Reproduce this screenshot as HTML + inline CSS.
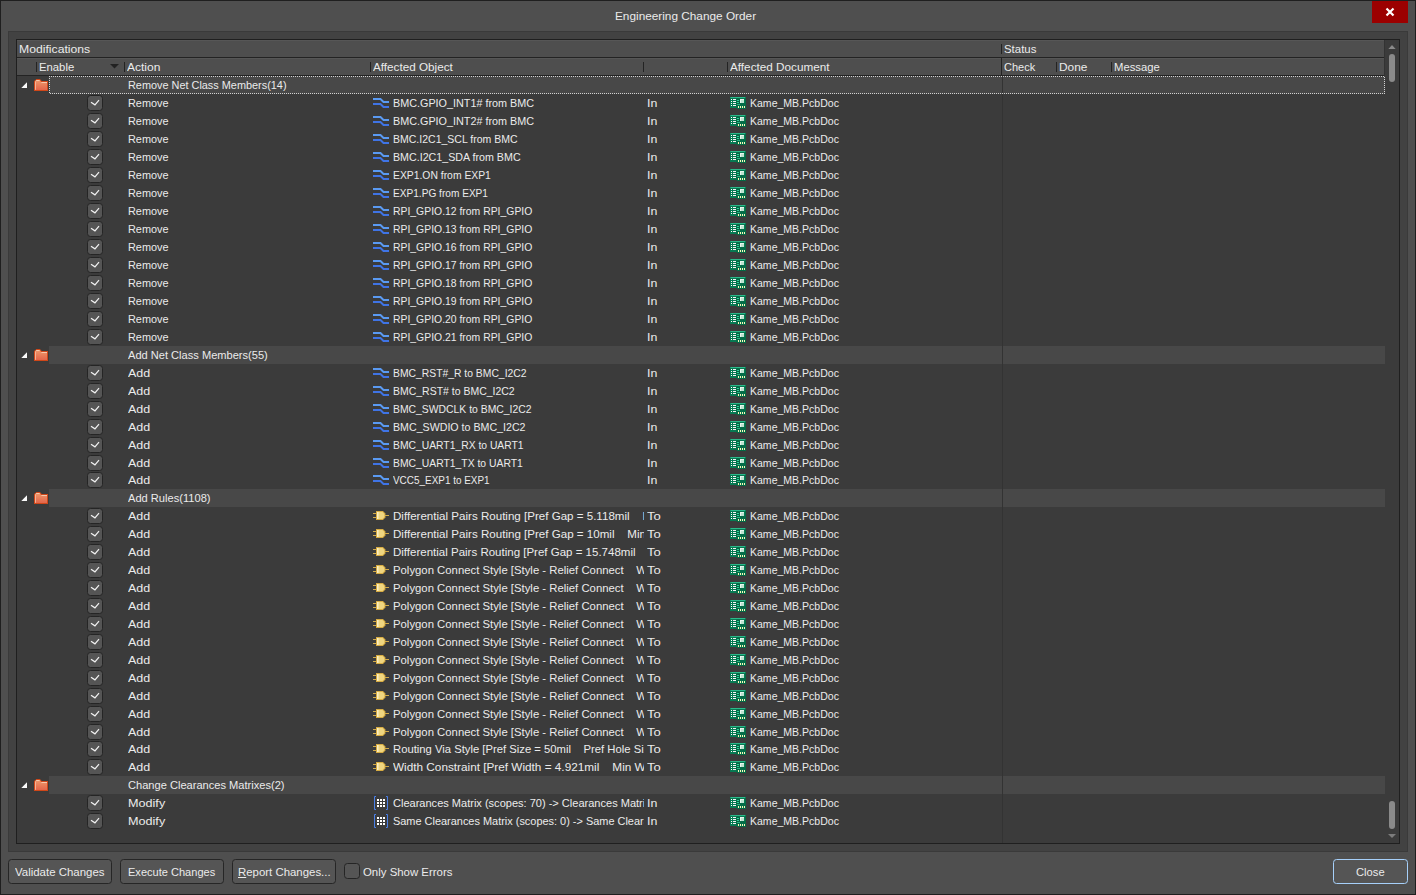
<!DOCTYPE html>
<html lang="en"><head><meta charset="utf-8"><title>Engineering Change Order</title>
<style>
html,body{margin:0;padding:0;background:#4f4f4f;}
body{width:1416px;height:895px;overflow:hidden;position:relative;font:11px/18px "Liberation Sans", sans-serif;color:#ebebeb;}
.abs,.ic,.t,.cb,.ln,.cell,.btn{position:absolute;}
.ic{display:block;}
.t{display:inline-block;white-space:pre;transform-origin:0 50%;left:0;top:0;line-height:18px;}
.cell{height:18px;overflow:hidden;white-space:pre;}
#win{position:absolute;left:0;top:0;width:1414px;height:893px;border:1px solid #1f1f1f;background:#4f4f4f;}
#panel{position:absolute;left:8px;top:31px;width:1398px;height:819px;border:1px solid #3a3a3a;background:#424242;}
#grid{position:absolute;left:16px;top:39px;width:1382px;height:803px;border:1px solid #1f1f1f;background:#3b3b3b;}
.hdr{position:absolute;left:17px;width:1367px;background:#4e4e4e;border-top:1px solid #565656;box-sizing:border-box;}
.ln{background:#232323;}
.g{position:absolute;left:49px;width:1336px;height:18px;background:#484848;}
.cb{left:87px;width:14px;height:14px;border:1px solid #252525;border-radius:3.5px;background:#555;}
.cb svg{position:absolute;left:0;top:0;}
.btn{top:859px;height:23px;border:1px solid #262626;border-radius:3.5px;background:#555;}
.thumb{position:absolute;left:1389px;width:6px;border-radius:3px;background:#8a8a8a;}

</style></head><body>
<div id="win"></div>
<div class="cell" style="left:615px;top:7px;width:200px;height:20px"><span class="t" style="transform:scaleX(1.0731);">Engineering Change Order</span></div>
<div class="abs" style="left:1372px;top:1px;width:36px;height:22px;background:#9c0000"></div>
<svg class="ic" style="left:1385px;top:7px" width="10" height="10" viewBox="0 0 10 10"><path d="M1.5 1.5L8.5 8.5M8.5 1.5L1.5 8.5" stroke="#fff" stroke-width="2.2"/></svg>
<div id="panel"></div><div id="grid"></div>
<div class="hdr" style="top:40px;height:17px"></div><div class="hdr" style="top:58px;height:17px"></div>
<div class="ln" style="left:17px;top:57px;width:1367px;height:1px"></div>
<div class="ln" style="left:17px;top:75px;width:1367px;height:1px"></div>
<div class="ln" style="left:1384px;top:40px;width:1px;height:36px;background:#333"></div>
<div class="ln" style="left:36px;top:62px;width:1px;height:10px"></div>
<div class="ln" style="left:124px;top:62px;width:1px;height:10px"></div>
<div class="ln" style="left:370px;top:62px;width:1px;height:10px"></div>
<div class="ln" style="left:643px;top:62px;width:1px;height:10px"></div>
<div class="ln" style="left:727px;top:62px;width:1px;height:10px"></div>
<div class="ln" style="left:1056px;top:62px;width:1px;height:10px"></div>
<div class="ln" style="left:1111px;top:62px;width:1px;height:10px"></div>
<div class="ln" style="left:1001px;top:44px;width:1px;height:10px"></div>
<div class="ln" style="left:1001px;top:58px;width:1px;height:17px"></div>
<svg class="ic" style="left:110px;top:64px" width="9" height="5" viewBox="0 0 9 5"><path d="M0 0H9L4.5 4.5Z" fill="#222"/></svg>
<div class="cell" style="left:19px;top:40px;width:200px;height:17px"><span class="t" style="transform:scaleX(1.109);">Modifications</span></div>
<div class="cell" style="left:1004px;top:40px;width:200px;height:17px"><span class="t" style="transform:scaleX(1.0389);">Status</span></div>
<div class="cell" style="left:39px;top:58px;width:200px;height:17px"><span class="t" style="transform:scaleX(1.0273);">Enable</span></div>
<div class="cell" style="left:127px;top:58px;width:200px;height:17px"><span class="t" style="transform:scaleX(1.0923);">Action</span></div>
<div class="cell" style="left:373px;top:58px;width:200px;height:17px"><span class="t" style="transform:scaleX(1.0638);">Affected Object</span></div>
<div class="cell" style="left:730px;top:58px;width:200px;height:17px"><span class="t" style="transform:scaleX(1.0658);">Affected Document</span></div>
<div class="cell" style="left:1004px;top:58px;width:200px;height:17px"><span class="t" style="transform:scaleX(1.0004);">Check</span></div>
<div class="cell" style="left:1059px;top:58px;width:200px;height:17px"><span class="t" style="transform:scaleX(1.08);">Done</span></div>
<div class="cell" style="left:1114px;top:58px;width:200px;height:17px"><span class="t" style="transform:scaleX(1.0237);">Message</span></div>
<div class="g" style="top:76px"></div>
<svg class="ic" style="left:21px;top:82px" width="6" height="6" viewBox="0 0 6 6"><path d="M6 0.3V6H0.3Z" fill="#fafafa"/></svg>
<svg class="ic" style="left:34px;top:79px" width="14" height="12" viewBox="0 0 14 12"><defs><linearGradient id="fg" x1="0" y1="0" x2="0" y2="1"><stop offset="0" stop-color="#ee9a6c"/><stop offset="1" stop-color="#e3654a"/></linearGradient></defs><path d="M0 2.4Q0.3 1.2 1.6 0.9L2.2 0.1H5.9Q7 0.9 7.7 2H14V12H0Z" fill="#cf4719"/><path d="M1 2.2L2.2 1H5.7L7.1 3H13V11H1Z" fill="url(#fg)"/><path d="M2.2 1.5H5.5M7.4 3.5H13" stroke="#f6c9ad" stroke-width="1" fill="none"/><path d="M1.5 2.5V10.8" stroke="#f3b296" stroke-width="1"/></svg>
<div class="cell" style="left:128px;top:76px;width:500px;height:18px"><span class="t" style="transform:scaleX(0.9897);">Remove Net Class Members(14)</span></div>
<div class="cb" style="top:95px"><svg width="14" height="14" viewBox="0 0 14 14"><path d="M3 6.2L6.95 8.85L11 4.1" fill="none" stroke="#f2f2f2" stroke-width="1.2"/></svg></div>
<div class="cell" style="left:128px;top:94px;width:240px;height:18px"><span class="t" style="transform:scaleX(0.991);">Remove</span></div>
<svg class="ic" style="left:373px;top:98px" width="16" height="10" viewBox="0 0 16 10"><path d="M0 1H7.5L10.5 4H16" fill="none" stroke="#5a9af2" stroke-width="2"/><path d="M0 6H7.5L10.5 9H16" fill="none" stroke="#3f74e6" stroke-width="2"/></svg>
<div class="cell" style="left:393px;top:94px;width:251px;height:18px"><span class="t" style="transform:scaleX(0.9816);">BMC.GPIO_INT1# from BMC</span></div>
<div class="cell" style="left:646.5px;top:94px;width:60px;height:18px"><span class="t" style="transform:scaleX(1.1211);">In</span></div>
<svg class="ic" style="left:730px;top:97px" width="16" height="12" viewBox="0 0 16 12"><path d="M0 0H16V12H7V11H0Z" fill="#077a53"/><path d="M0.5 0.5H15.5" stroke="#2bb98a" stroke-width="1"/><path d="M7 5.5V11.5H15.5V0.5" stroke="#056a45" stroke-width="1" fill="none"/><rect x="6.5" y="1.5" width="3.5" height="7.5" fill="#04633f" opacity="0.75"/><rect x="10" y="6.2" width="5" height="2.6" fill="#04633f" opacity="0.6"/><rect x="10" y="2" width="4" height="4" fill="#e9f7ef"/><rect x="11" y="3" width="3" height="3" fill="#bfe3d0"/><rect x="1" y="2" width="1" height="1" fill="#fff"/><rect x="3" y="2" width="3" height="1" fill="#f4f4f4"/><rect x="1" y="4" width="1" height="1" fill="#fff"/><rect x="3" y="4" width="3" height="1" fill="#f4f4f4"/><rect x="1" y="6" width="1" height="1" fill="#fff"/><rect x="3" y="6" width="3" height="1" fill="#f4f4f4"/><rect x="1" y="8" width="1" height="1" fill="#fff"/><rect x="3" y="8" width="3" height="1" fill="#f4f4f4"/><rect x="7" y="3" width="2" height="1" fill="#2fcf9a"/><rect x="7" y="5" width="2" height="1" fill="#2fcf9a"/><rect x="7" y="7" width="3" height="1" fill="#25b585"/><rect x="8" y="9" width="1" height="2" fill="#fdf6b8"/><rect x="10" y="9" width="1" height="2" fill="#fdf6b8"/><rect x="12" y="9" width="1" height="2" fill="#fdf6b8"/><rect x="14" y="9" width="1" height="2" fill="#fdf6b8"/></svg>
<div class="cell" style="left:750px;top:94px;width:240px;height:18px"><span class="t" style="transform:scaleX(0.9566);">Kame_MB.PcbDoc</span></div>
<div class="cb" style="top:113px"><svg width="14" height="14" viewBox="0 0 14 14"><path d="M3 6.2L6.95 8.85L11 4.1" fill="none" stroke="#f2f2f2" stroke-width="1.2"/></svg></div>
<div class="cell" style="left:128px;top:112px;width:240px;height:18px"><span class="t" style="transform:scaleX(0.991);">Remove</span></div>
<svg class="ic" style="left:373px;top:116px" width="16" height="10" viewBox="0 0 16 10"><path d="M0 1H7.5L10.5 4H16" fill="none" stroke="#5a9af2" stroke-width="2"/><path d="M0 6H7.5L10.5 9H16" fill="none" stroke="#3f74e6" stroke-width="2"/></svg>
<div class="cell" style="left:393px;top:112px;width:251px;height:18px"><span class="t" style="transform:scaleX(0.9816);">BMC.GPIO_INT2# from BMC</span></div>
<div class="cell" style="left:646.5px;top:112px;width:60px;height:18px"><span class="t" style="transform:scaleX(1.1211);">In</span></div>
<svg class="ic" style="left:730px;top:115px" width="16" height="12" viewBox="0 0 16 12"><path d="M0 0H16V12H7V11H0Z" fill="#077a53"/><path d="M0.5 0.5H15.5" stroke="#2bb98a" stroke-width="1"/><path d="M7 5.5V11.5H15.5V0.5" stroke="#056a45" stroke-width="1" fill="none"/><rect x="6.5" y="1.5" width="3.5" height="7.5" fill="#04633f" opacity="0.75"/><rect x="10" y="6.2" width="5" height="2.6" fill="#04633f" opacity="0.6"/><rect x="10" y="2" width="4" height="4" fill="#e9f7ef"/><rect x="11" y="3" width="3" height="3" fill="#bfe3d0"/><rect x="1" y="2" width="1" height="1" fill="#fff"/><rect x="3" y="2" width="3" height="1" fill="#f4f4f4"/><rect x="1" y="4" width="1" height="1" fill="#fff"/><rect x="3" y="4" width="3" height="1" fill="#f4f4f4"/><rect x="1" y="6" width="1" height="1" fill="#fff"/><rect x="3" y="6" width="3" height="1" fill="#f4f4f4"/><rect x="1" y="8" width="1" height="1" fill="#fff"/><rect x="3" y="8" width="3" height="1" fill="#f4f4f4"/><rect x="7" y="3" width="2" height="1" fill="#2fcf9a"/><rect x="7" y="5" width="2" height="1" fill="#2fcf9a"/><rect x="7" y="7" width="3" height="1" fill="#25b585"/><rect x="8" y="9" width="1" height="2" fill="#fdf6b8"/><rect x="10" y="9" width="1" height="2" fill="#fdf6b8"/><rect x="12" y="9" width="1" height="2" fill="#fdf6b8"/><rect x="14" y="9" width="1" height="2" fill="#fdf6b8"/></svg>
<div class="cell" style="left:750px;top:112px;width:240px;height:18px"><span class="t" style="transform:scaleX(0.9566);">Kame_MB.PcbDoc</span></div>
<div class="cb" style="top:131px"><svg width="14" height="14" viewBox="0 0 14 14"><path d="M3 6.2L6.95 8.85L11 4.1" fill="none" stroke="#f2f2f2" stroke-width="1.2"/></svg></div>
<div class="cell" style="left:128px;top:130px;width:240px;height:18px"><span class="t" style="transform:scaleX(0.991);">Remove</span></div>
<svg class="ic" style="left:373px;top:134px" width="16" height="10" viewBox="0 0 16 10"><path d="M0 1H7.5L10.5 4H16" fill="none" stroke="#5a9af2" stroke-width="2"/><path d="M0 6H7.5L10.5 9H16" fill="none" stroke="#3f74e6" stroke-width="2"/></svg>
<div class="cell" style="left:393px;top:130px;width:251px;height:18px"><span class="t" style="transform:scaleX(0.9555);">BMC.I2C1_SCL from BMC</span></div>
<div class="cell" style="left:646.5px;top:130px;width:60px;height:18px"><span class="t" style="transform:scaleX(1.1211);">In</span></div>
<svg class="ic" style="left:730px;top:133px" width="16" height="12" viewBox="0 0 16 12"><path d="M0 0H16V12H7V11H0Z" fill="#077a53"/><path d="M0.5 0.5H15.5" stroke="#2bb98a" stroke-width="1"/><path d="M7 5.5V11.5H15.5V0.5" stroke="#056a45" stroke-width="1" fill="none"/><rect x="6.5" y="1.5" width="3.5" height="7.5" fill="#04633f" opacity="0.75"/><rect x="10" y="6.2" width="5" height="2.6" fill="#04633f" opacity="0.6"/><rect x="10" y="2" width="4" height="4" fill="#e9f7ef"/><rect x="11" y="3" width="3" height="3" fill="#bfe3d0"/><rect x="1" y="2" width="1" height="1" fill="#fff"/><rect x="3" y="2" width="3" height="1" fill="#f4f4f4"/><rect x="1" y="4" width="1" height="1" fill="#fff"/><rect x="3" y="4" width="3" height="1" fill="#f4f4f4"/><rect x="1" y="6" width="1" height="1" fill="#fff"/><rect x="3" y="6" width="3" height="1" fill="#f4f4f4"/><rect x="1" y="8" width="1" height="1" fill="#fff"/><rect x="3" y="8" width="3" height="1" fill="#f4f4f4"/><rect x="7" y="3" width="2" height="1" fill="#2fcf9a"/><rect x="7" y="5" width="2" height="1" fill="#2fcf9a"/><rect x="7" y="7" width="3" height="1" fill="#25b585"/><rect x="8" y="9" width="1" height="2" fill="#fdf6b8"/><rect x="10" y="9" width="1" height="2" fill="#fdf6b8"/><rect x="12" y="9" width="1" height="2" fill="#fdf6b8"/><rect x="14" y="9" width="1" height="2" fill="#fdf6b8"/></svg>
<div class="cell" style="left:750px;top:130px;width:240px;height:18px"><span class="t" style="transform:scaleX(0.9566);">Kame_MB.PcbDoc</span></div>
<div class="cb" style="top:149px"><svg width="14" height="14" viewBox="0 0 14 14"><path d="M3 6.2L6.95 8.85L11 4.1" fill="none" stroke="#f2f2f2" stroke-width="1.2"/></svg></div>
<div class="cell" style="left:128px;top:148px;width:240px;height:18px"><span class="t" style="transform:scaleX(0.991);">Remove</span></div>
<svg class="ic" style="left:373px;top:152px" width="16" height="10" viewBox="0 0 16 10"><path d="M0 1H7.5L10.5 4H16" fill="none" stroke="#5a9af2" stroke-width="2"/><path d="M0 6H7.5L10.5 9H16" fill="none" stroke="#3f74e6" stroke-width="2"/></svg>
<div class="cell" style="left:393px;top:148px;width:251px;height:18px"><span class="t" style="transform:scaleX(0.9709);">BMC.I2C1_SDA from BMC</span></div>
<div class="cell" style="left:646.5px;top:148px;width:60px;height:18px"><span class="t" style="transform:scaleX(1.1211);">In</span></div>
<svg class="ic" style="left:730px;top:151px" width="16" height="12" viewBox="0 0 16 12"><path d="M0 0H16V12H7V11H0Z" fill="#077a53"/><path d="M0.5 0.5H15.5" stroke="#2bb98a" stroke-width="1"/><path d="M7 5.5V11.5H15.5V0.5" stroke="#056a45" stroke-width="1" fill="none"/><rect x="6.5" y="1.5" width="3.5" height="7.5" fill="#04633f" opacity="0.75"/><rect x="10" y="6.2" width="5" height="2.6" fill="#04633f" opacity="0.6"/><rect x="10" y="2" width="4" height="4" fill="#e9f7ef"/><rect x="11" y="3" width="3" height="3" fill="#bfe3d0"/><rect x="1" y="2" width="1" height="1" fill="#fff"/><rect x="3" y="2" width="3" height="1" fill="#f4f4f4"/><rect x="1" y="4" width="1" height="1" fill="#fff"/><rect x="3" y="4" width="3" height="1" fill="#f4f4f4"/><rect x="1" y="6" width="1" height="1" fill="#fff"/><rect x="3" y="6" width="3" height="1" fill="#f4f4f4"/><rect x="1" y="8" width="1" height="1" fill="#fff"/><rect x="3" y="8" width="3" height="1" fill="#f4f4f4"/><rect x="7" y="3" width="2" height="1" fill="#2fcf9a"/><rect x="7" y="5" width="2" height="1" fill="#2fcf9a"/><rect x="7" y="7" width="3" height="1" fill="#25b585"/><rect x="8" y="9" width="1" height="2" fill="#fdf6b8"/><rect x="10" y="9" width="1" height="2" fill="#fdf6b8"/><rect x="12" y="9" width="1" height="2" fill="#fdf6b8"/><rect x="14" y="9" width="1" height="2" fill="#fdf6b8"/></svg>
<div class="cell" style="left:750px;top:148px;width:240px;height:18px"><span class="t" style="transform:scaleX(0.9566);">Kame_MB.PcbDoc</span></div>
<div class="cb" style="top:167px"><svg width="14" height="14" viewBox="0 0 14 14"><path d="M3 6.2L6.95 8.85L11 4.1" fill="none" stroke="#f2f2f2" stroke-width="1.2"/></svg></div>
<div class="cell" style="left:128px;top:166px;width:240px;height:18px"><span class="t" style="transform:scaleX(0.991);">Remove</span></div>
<svg class="ic" style="left:373px;top:170px" width="16" height="10" viewBox="0 0 16 10"><path d="M0 1H7.5L10.5 4H16" fill="none" stroke="#5a9af2" stroke-width="2"/><path d="M0 6H7.5L10.5 9H16" fill="none" stroke="#3f74e6" stroke-width="2"/></svg>
<div class="cell" style="left:393px;top:166px;width:251px;height:18px"><span class="t" style="transform:scaleX(0.9419);">EXP1.ON from EXP1</span></div>
<div class="cell" style="left:646.5px;top:166px;width:60px;height:18px"><span class="t" style="transform:scaleX(1.1211);">In</span></div>
<svg class="ic" style="left:730px;top:169px" width="16" height="12" viewBox="0 0 16 12"><path d="M0 0H16V12H7V11H0Z" fill="#077a53"/><path d="M0.5 0.5H15.5" stroke="#2bb98a" stroke-width="1"/><path d="M7 5.5V11.5H15.5V0.5" stroke="#056a45" stroke-width="1" fill="none"/><rect x="6.5" y="1.5" width="3.5" height="7.5" fill="#04633f" opacity="0.75"/><rect x="10" y="6.2" width="5" height="2.6" fill="#04633f" opacity="0.6"/><rect x="10" y="2" width="4" height="4" fill="#e9f7ef"/><rect x="11" y="3" width="3" height="3" fill="#bfe3d0"/><rect x="1" y="2" width="1" height="1" fill="#fff"/><rect x="3" y="2" width="3" height="1" fill="#f4f4f4"/><rect x="1" y="4" width="1" height="1" fill="#fff"/><rect x="3" y="4" width="3" height="1" fill="#f4f4f4"/><rect x="1" y="6" width="1" height="1" fill="#fff"/><rect x="3" y="6" width="3" height="1" fill="#f4f4f4"/><rect x="1" y="8" width="1" height="1" fill="#fff"/><rect x="3" y="8" width="3" height="1" fill="#f4f4f4"/><rect x="7" y="3" width="2" height="1" fill="#2fcf9a"/><rect x="7" y="5" width="2" height="1" fill="#2fcf9a"/><rect x="7" y="7" width="3" height="1" fill="#25b585"/><rect x="8" y="9" width="1" height="2" fill="#fdf6b8"/><rect x="10" y="9" width="1" height="2" fill="#fdf6b8"/><rect x="12" y="9" width="1" height="2" fill="#fdf6b8"/><rect x="14" y="9" width="1" height="2" fill="#fdf6b8"/></svg>
<div class="cell" style="left:750px;top:166px;width:240px;height:18px"><span class="t" style="transform:scaleX(0.9566);">Kame_MB.PcbDoc</span></div>
<div class="cb" style="top:185px"><svg width="14" height="14" viewBox="0 0 14 14"><path d="M3 6.2L6.95 8.85L11 4.1" fill="none" stroke="#f2f2f2" stroke-width="1.2"/></svg></div>
<div class="cell" style="left:128px;top:184px;width:240px;height:18px"><span class="t" style="transform:scaleX(0.991);">Remove</span></div>
<svg class="ic" style="left:373px;top:188px" width="16" height="10" viewBox="0 0 16 10"><path d="M0 1H7.5L10.5 4H16" fill="none" stroke="#5a9af2" stroke-width="2"/><path d="M0 6H7.5L10.5 9H16" fill="none" stroke="#3f74e6" stroke-width="2"/></svg>
<div class="cell" style="left:393px;top:184px;width:251px;height:18px"><span class="t" style="transform:scaleX(0.9194);">EXP1.PG from EXP1</span></div>
<div class="cell" style="left:646.5px;top:184px;width:60px;height:18px"><span class="t" style="transform:scaleX(1.1211);">In</span></div>
<svg class="ic" style="left:730px;top:187px" width="16" height="12" viewBox="0 0 16 12"><path d="M0 0H16V12H7V11H0Z" fill="#077a53"/><path d="M0.5 0.5H15.5" stroke="#2bb98a" stroke-width="1"/><path d="M7 5.5V11.5H15.5V0.5" stroke="#056a45" stroke-width="1" fill="none"/><rect x="6.5" y="1.5" width="3.5" height="7.5" fill="#04633f" opacity="0.75"/><rect x="10" y="6.2" width="5" height="2.6" fill="#04633f" opacity="0.6"/><rect x="10" y="2" width="4" height="4" fill="#e9f7ef"/><rect x="11" y="3" width="3" height="3" fill="#bfe3d0"/><rect x="1" y="2" width="1" height="1" fill="#fff"/><rect x="3" y="2" width="3" height="1" fill="#f4f4f4"/><rect x="1" y="4" width="1" height="1" fill="#fff"/><rect x="3" y="4" width="3" height="1" fill="#f4f4f4"/><rect x="1" y="6" width="1" height="1" fill="#fff"/><rect x="3" y="6" width="3" height="1" fill="#f4f4f4"/><rect x="1" y="8" width="1" height="1" fill="#fff"/><rect x="3" y="8" width="3" height="1" fill="#f4f4f4"/><rect x="7" y="3" width="2" height="1" fill="#2fcf9a"/><rect x="7" y="5" width="2" height="1" fill="#2fcf9a"/><rect x="7" y="7" width="3" height="1" fill="#25b585"/><rect x="8" y="9" width="1" height="2" fill="#fdf6b8"/><rect x="10" y="9" width="1" height="2" fill="#fdf6b8"/><rect x="12" y="9" width="1" height="2" fill="#fdf6b8"/><rect x="14" y="9" width="1" height="2" fill="#fdf6b8"/></svg>
<div class="cell" style="left:750px;top:184px;width:240px;height:18px"><span class="t" style="transform:scaleX(0.9566);">Kame_MB.PcbDoc</span></div>
<div class="cb" style="top:203px"><svg width="14" height="14" viewBox="0 0 14 14"><path d="M3 6.2L6.95 8.85L11 4.1" fill="none" stroke="#f2f2f2" stroke-width="1.2"/></svg></div>
<div class="cell" style="left:128px;top:202px;width:240px;height:18px"><span class="t" style="transform:scaleX(0.991);">Remove</span></div>
<svg class="ic" style="left:373px;top:206px" width="16" height="10" viewBox="0 0 16 10"><path d="M0 1H7.5L10.5 4H16" fill="none" stroke="#5a9af2" stroke-width="2"/><path d="M0 6H7.5L10.5 9H16" fill="none" stroke="#3f74e6" stroke-width="2"/></svg>
<div class="cell" style="left:393px;top:202px;width:251px;height:18px"><span class="t" style="transform:scaleX(0.9455);">RPI_GPIO.12 from RPI_GPIO</span></div>
<div class="cell" style="left:646.5px;top:202px;width:60px;height:18px"><span class="t" style="transform:scaleX(1.1211);">In</span></div>
<svg class="ic" style="left:730px;top:205px" width="16" height="12" viewBox="0 0 16 12"><path d="M0 0H16V12H7V11H0Z" fill="#077a53"/><path d="M0.5 0.5H15.5" stroke="#2bb98a" stroke-width="1"/><path d="M7 5.5V11.5H15.5V0.5" stroke="#056a45" stroke-width="1" fill="none"/><rect x="6.5" y="1.5" width="3.5" height="7.5" fill="#04633f" opacity="0.75"/><rect x="10" y="6.2" width="5" height="2.6" fill="#04633f" opacity="0.6"/><rect x="10" y="2" width="4" height="4" fill="#e9f7ef"/><rect x="11" y="3" width="3" height="3" fill="#bfe3d0"/><rect x="1" y="2" width="1" height="1" fill="#fff"/><rect x="3" y="2" width="3" height="1" fill="#f4f4f4"/><rect x="1" y="4" width="1" height="1" fill="#fff"/><rect x="3" y="4" width="3" height="1" fill="#f4f4f4"/><rect x="1" y="6" width="1" height="1" fill="#fff"/><rect x="3" y="6" width="3" height="1" fill="#f4f4f4"/><rect x="1" y="8" width="1" height="1" fill="#fff"/><rect x="3" y="8" width="3" height="1" fill="#f4f4f4"/><rect x="7" y="3" width="2" height="1" fill="#2fcf9a"/><rect x="7" y="5" width="2" height="1" fill="#2fcf9a"/><rect x="7" y="7" width="3" height="1" fill="#25b585"/><rect x="8" y="9" width="1" height="2" fill="#fdf6b8"/><rect x="10" y="9" width="1" height="2" fill="#fdf6b8"/><rect x="12" y="9" width="1" height="2" fill="#fdf6b8"/><rect x="14" y="9" width="1" height="2" fill="#fdf6b8"/></svg>
<div class="cell" style="left:750px;top:202px;width:240px;height:18px"><span class="t" style="transform:scaleX(0.9566);">Kame_MB.PcbDoc</span></div>
<div class="cb" style="top:221px"><svg width="14" height="14" viewBox="0 0 14 14"><path d="M3 6.2L6.95 8.85L11 4.1" fill="none" stroke="#f2f2f2" stroke-width="1.2"/></svg></div>
<div class="cell" style="left:128px;top:220px;width:240px;height:18px"><span class="t" style="transform:scaleX(0.991);">Remove</span></div>
<svg class="ic" style="left:373px;top:224px" width="16" height="10" viewBox="0 0 16 10"><path d="M0 1H7.5L10.5 4H16" fill="none" stroke="#5a9af2" stroke-width="2"/><path d="M0 6H7.5L10.5 9H16" fill="none" stroke="#3f74e6" stroke-width="2"/></svg>
<div class="cell" style="left:393px;top:220px;width:251px;height:18px"><span class="t" style="transform:scaleX(0.9455);">RPI_GPIO.13 from RPI_GPIO</span></div>
<div class="cell" style="left:646.5px;top:220px;width:60px;height:18px"><span class="t" style="transform:scaleX(1.1211);">In</span></div>
<svg class="ic" style="left:730px;top:223px" width="16" height="12" viewBox="0 0 16 12"><path d="M0 0H16V12H7V11H0Z" fill="#077a53"/><path d="M0.5 0.5H15.5" stroke="#2bb98a" stroke-width="1"/><path d="M7 5.5V11.5H15.5V0.5" stroke="#056a45" stroke-width="1" fill="none"/><rect x="6.5" y="1.5" width="3.5" height="7.5" fill="#04633f" opacity="0.75"/><rect x="10" y="6.2" width="5" height="2.6" fill="#04633f" opacity="0.6"/><rect x="10" y="2" width="4" height="4" fill="#e9f7ef"/><rect x="11" y="3" width="3" height="3" fill="#bfe3d0"/><rect x="1" y="2" width="1" height="1" fill="#fff"/><rect x="3" y="2" width="3" height="1" fill="#f4f4f4"/><rect x="1" y="4" width="1" height="1" fill="#fff"/><rect x="3" y="4" width="3" height="1" fill="#f4f4f4"/><rect x="1" y="6" width="1" height="1" fill="#fff"/><rect x="3" y="6" width="3" height="1" fill="#f4f4f4"/><rect x="1" y="8" width="1" height="1" fill="#fff"/><rect x="3" y="8" width="3" height="1" fill="#f4f4f4"/><rect x="7" y="3" width="2" height="1" fill="#2fcf9a"/><rect x="7" y="5" width="2" height="1" fill="#2fcf9a"/><rect x="7" y="7" width="3" height="1" fill="#25b585"/><rect x="8" y="9" width="1" height="2" fill="#fdf6b8"/><rect x="10" y="9" width="1" height="2" fill="#fdf6b8"/><rect x="12" y="9" width="1" height="2" fill="#fdf6b8"/><rect x="14" y="9" width="1" height="2" fill="#fdf6b8"/></svg>
<div class="cell" style="left:750px;top:220px;width:240px;height:18px"><span class="t" style="transform:scaleX(0.9566);">Kame_MB.PcbDoc</span></div>
<div class="cb" style="top:239px"><svg width="14" height="14" viewBox="0 0 14 14"><path d="M3 6.2L6.95 8.85L11 4.1" fill="none" stroke="#f2f2f2" stroke-width="1.2"/></svg></div>
<div class="cell" style="left:128px;top:238px;width:240px;height:18px"><span class="t" style="transform:scaleX(0.991);">Remove</span></div>
<svg class="ic" style="left:373px;top:242px" width="16" height="10" viewBox="0 0 16 10"><path d="M0 1H7.5L10.5 4H16" fill="none" stroke="#5a9af2" stroke-width="2"/><path d="M0 6H7.5L10.5 9H16" fill="none" stroke="#3f74e6" stroke-width="2"/></svg>
<div class="cell" style="left:393px;top:238px;width:251px;height:18px"><span class="t" style="transform:scaleX(0.9455);">RPI_GPIO.16 from RPI_GPIO</span></div>
<div class="cell" style="left:646.5px;top:238px;width:60px;height:18px"><span class="t" style="transform:scaleX(1.1211);">In</span></div>
<svg class="ic" style="left:730px;top:241px" width="16" height="12" viewBox="0 0 16 12"><path d="M0 0H16V12H7V11H0Z" fill="#077a53"/><path d="M0.5 0.5H15.5" stroke="#2bb98a" stroke-width="1"/><path d="M7 5.5V11.5H15.5V0.5" stroke="#056a45" stroke-width="1" fill="none"/><rect x="6.5" y="1.5" width="3.5" height="7.5" fill="#04633f" opacity="0.75"/><rect x="10" y="6.2" width="5" height="2.6" fill="#04633f" opacity="0.6"/><rect x="10" y="2" width="4" height="4" fill="#e9f7ef"/><rect x="11" y="3" width="3" height="3" fill="#bfe3d0"/><rect x="1" y="2" width="1" height="1" fill="#fff"/><rect x="3" y="2" width="3" height="1" fill="#f4f4f4"/><rect x="1" y="4" width="1" height="1" fill="#fff"/><rect x="3" y="4" width="3" height="1" fill="#f4f4f4"/><rect x="1" y="6" width="1" height="1" fill="#fff"/><rect x="3" y="6" width="3" height="1" fill="#f4f4f4"/><rect x="1" y="8" width="1" height="1" fill="#fff"/><rect x="3" y="8" width="3" height="1" fill="#f4f4f4"/><rect x="7" y="3" width="2" height="1" fill="#2fcf9a"/><rect x="7" y="5" width="2" height="1" fill="#2fcf9a"/><rect x="7" y="7" width="3" height="1" fill="#25b585"/><rect x="8" y="9" width="1" height="2" fill="#fdf6b8"/><rect x="10" y="9" width="1" height="2" fill="#fdf6b8"/><rect x="12" y="9" width="1" height="2" fill="#fdf6b8"/><rect x="14" y="9" width="1" height="2" fill="#fdf6b8"/></svg>
<div class="cell" style="left:750px;top:238px;width:240px;height:18px"><span class="t" style="transform:scaleX(0.9566);">Kame_MB.PcbDoc</span></div>
<div class="cb" style="top:257px"><svg width="14" height="14" viewBox="0 0 14 14"><path d="M3 6.2L6.95 8.85L11 4.1" fill="none" stroke="#f2f2f2" stroke-width="1.2"/></svg></div>
<div class="cell" style="left:128px;top:256px;width:240px;height:18px"><span class="t" style="transform:scaleX(0.991);">Remove</span></div>
<svg class="ic" style="left:373px;top:260px" width="16" height="10" viewBox="0 0 16 10"><path d="M0 1H7.5L10.5 4H16" fill="none" stroke="#5a9af2" stroke-width="2"/><path d="M0 6H7.5L10.5 9H16" fill="none" stroke="#3f74e6" stroke-width="2"/></svg>
<div class="cell" style="left:393px;top:256px;width:251px;height:18px"><span class="t" style="transform:scaleX(0.9455);">RPI_GPIO.17 from RPI_GPIO</span></div>
<div class="cell" style="left:646.5px;top:256px;width:60px;height:18px"><span class="t" style="transform:scaleX(1.1211);">In</span></div>
<svg class="ic" style="left:730px;top:259px" width="16" height="12" viewBox="0 0 16 12"><path d="M0 0H16V12H7V11H0Z" fill="#077a53"/><path d="M0.5 0.5H15.5" stroke="#2bb98a" stroke-width="1"/><path d="M7 5.5V11.5H15.5V0.5" stroke="#056a45" stroke-width="1" fill="none"/><rect x="6.5" y="1.5" width="3.5" height="7.5" fill="#04633f" opacity="0.75"/><rect x="10" y="6.2" width="5" height="2.6" fill="#04633f" opacity="0.6"/><rect x="10" y="2" width="4" height="4" fill="#e9f7ef"/><rect x="11" y="3" width="3" height="3" fill="#bfe3d0"/><rect x="1" y="2" width="1" height="1" fill="#fff"/><rect x="3" y="2" width="3" height="1" fill="#f4f4f4"/><rect x="1" y="4" width="1" height="1" fill="#fff"/><rect x="3" y="4" width="3" height="1" fill="#f4f4f4"/><rect x="1" y="6" width="1" height="1" fill="#fff"/><rect x="3" y="6" width="3" height="1" fill="#f4f4f4"/><rect x="1" y="8" width="1" height="1" fill="#fff"/><rect x="3" y="8" width="3" height="1" fill="#f4f4f4"/><rect x="7" y="3" width="2" height="1" fill="#2fcf9a"/><rect x="7" y="5" width="2" height="1" fill="#2fcf9a"/><rect x="7" y="7" width="3" height="1" fill="#25b585"/><rect x="8" y="9" width="1" height="2" fill="#fdf6b8"/><rect x="10" y="9" width="1" height="2" fill="#fdf6b8"/><rect x="12" y="9" width="1" height="2" fill="#fdf6b8"/><rect x="14" y="9" width="1" height="2" fill="#fdf6b8"/></svg>
<div class="cell" style="left:750px;top:256px;width:240px;height:18px"><span class="t" style="transform:scaleX(0.9566);">Kame_MB.PcbDoc</span></div>
<div class="cb" style="top:275px"><svg width="14" height="14" viewBox="0 0 14 14"><path d="M3 6.2L6.95 8.85L11 4.1" fill="none" stroke="#f2f2f2" stroke-width="1.2"/></svg></div>
<div class="cell" style="left:128px;top:274px;width:240px;height:18px"><span class="t" style="transform:scaleX(0.991);">Remove</span></div>
<svg class="ic" style="left:373px;top:278px" width="16" height="10" viewBox="0 0 16 10"><path d="M0 1H7.5L10.5 4H16" fill="none" stroke="#5a9af2" stroke-width="2"/><path d="M0 6H7.5L10.5 9H16" fill="none" stroke="#3f74e6" stroke-width="2"/></svg>
<div class="cell" style="left:393px;top:274px;width:251px;height:18px"><span class="t" style="transform:scaleX(0.9455);">RPI_GPIO.18 from RPI_GPIO</span></div>
<div class="cell" style="left:646.5px;top:274px;width:60px;height:18px"><span class="t" style="transform:scaleX(1.1211);">In</span></div>
<svg class="ic" style="left:730px;top:277px" width="16" height="12" viewBox="0 0 16 12"><path d="M0 0H16V12H7V11H0Z" fill="#077a53"/><path d="M0.5 0.5H15.5" stroke="#2bb98a" stroke-width="1"/><path d="M7 5.5V11.5H15.5V0.5" stroke="#056a45" stroke-width="1" fill="none"/><rect x="6.5" y="1.5" width="3.5" height="7.5" fill="#04633f" opacity="0.75"/><rect x="10" y="6.2" width="5" height="2.6" fill="#04633f" opacity="0.6"/><rect x="10" y="2" width="4" height="4" fill="#e9f7ef"/><rect x="11" y="3" width="3" height="3" fill="#bfe3d0"/><rect x="1" y="2" width="1" height="1" fill="#fff"/><rect x="3" y="2" width="3" height="1" fill="#f4f4f4"/><rect x="1" y="4" width="1" height="1" fill="#fff"/><rect x="3" y="4" width="3" height="1" fill="#f4f4f4"/><rect x="1" y="6" width="1" height="1" fill="#fff"/><rect x="3" y="6" width="3" height="1" fill="#f4f4f4"/><rect x="1" y="8" width="1" height="1" fill="#fff"/><rect x="3" y="8" width="3" height="1" fill="#f4f4f4"/><rect x="7" y="3" width="2" height="1" fill="#2fcf9a"/><rect x="7" y="5" width="2" height="1" fill="#2fcf9a"/><rect x="7" y="7" width="3" height="1" fill="#25b585"/><rect x="8" y="9" width="1" height="2" fill="#fdf6b8"/><rect x="10" y="9" width="1" height="2" fill="#fdf6b8"/><rect x="12" y="9" width="1" height="2" fill="#fdf6b8"/><rect x="14" y="9" width="1" height="2" fill="#fdf6b8"/></svg>
<div class="cell" style="left:750px;top:274px;width:240px;height:18px"><span class="t" style="transform:scaleX(0.9566);">Kame_MB.PcbDoc</span></div>
<div class="cb" style="top:293px"><svg width="14" height="14" viewBox="0 0 14 14"><path d="M3 6.2L6.95 8.85L11 4.1" fill="none" stroke="#f2f2f2" stroke-width="1.2"/></svg></div>
<div class="cell" style="left:128px;top:292px;width:240px;height:18px"><span class="t" style="transform:scaleX(0.991);">Remove</span></div>
<svg class="ic" style="left:373px;top:296px" width="16" height="10" viewBox="0 0 16 10"><path d="M0 1H7.5L10.5 4H16" fill="none" stroke="#5a9af2" stroke-width="2"/><path d="M0 6H7.5L10.5 9H16" fill="none" stroke="#3f74e6" stroke-width="2"/></svg>
<div class="cell" style="left:393px;top:292px;width:251px;height:18px"><span class="t" style="transform:scaleX(0.9455);">RPI_GPIO.19 from RPI_GPIO</span></div>
<div class="cell" style="left:646.5px;top:292px;width:60px;height:18px"><span class="t" style="transform:scaleX(1.1211);">In</span></div>
<svg class="ic" style="left:730px;top:295px" width="16" height="12" viewBox="0 0 16 12"><path d="M0 0H16V12H7V11H0Z" fill="#077a53"/><path d="M0.5 0.5H15.5" stroke="#2bb98a" stroke-width="1"/><path d="M7 5.5V11.5H15.5V0.5" stroke="#056a45" stroke-width="1" fill="none"/><rect x="6.5" y="1.5" width="3.5" height="7.5" fill="#04633f" opacity="0.75"/><rect x="10" y="6.2" width="5" height="2.6" fill="#04633f" opacity="0.6"/><rect x="10" y="2" width="4" height="4" fill="#e9f7ef"/><rect x="11" y="3" width="3" height="3" fill="#bfe3d0"/><rect x="1" y="2" width="1" height="1" fill="#fff"/><rect x="3" y="2" width="3" height="1" fill="#f4f4f4"/><rect x="1" y="4" width="1" height="1" fill="#fff"/><rect x="3" y="4" width="3" height="1" fill="#f4f4f4"/><rect x="1" y="6" width="1" height="1" fill="#fff"/><rect x="3" y="6" width="3" height="1" fill="#f4f4f4"/><rect x="1" y="8" width="1" height="1" fill="#fff"/><rect x="3" y="8" width="3" height="1" fill="#f4f4f4"/><rect x="7" y="3" width="2" height="1" fill="#2fcf9a"/><rect x="7" y="5" width="2" height="1" fill="#2fcf9a"/><rect x="7" y="7" width="3" height="1" fill="#25b585"/><rect x="8" y="9" width="1" height="2" fill="#fdf6b8"/><rect x="10" y="9" width="1" height="2" fill="#fdf6b8"/><rect x="12" y="9" width="1" height="2" fill="#fdf6b8"/><rect x="14" y="9" width="1" height="2" fill="#fdf6b8"/></svg>
<div class="cell" style="left:750px;top:292px;width:240px;height:18px"><span class="t" style="transform:scaleX(0.9566);">Kame_MB.PcbDoc</span></div>
<div class="cb" style="top:311px"><svg width="14" height="14" viewBox="0 0 14 14"><path d="M3 6.2L6.95 8.85L11 4.1" fill="none" stroke="#f2f2f2" stroke-width="1.2"/></svg></div>
<div class="cell" style="left:128px;top:310px;width:240px;height:18px"><span class="t" style="transform:scaleX(0.991);">Remove</span></div>
<svg class="ic" style="left:373px;top:314px" width="16" height="10" viewBox="0 0 16 10"><path d="M0 1H7.5L10.5 4H16" fill="none" stroke="#5a9af2" stroke-width="2"/><path d="M0 6H7.5L10.5 9H16" fill="none" stroke="#3f74e6" stroke-width="2"/></svg>
<div class="cell" style="left:393px;top:310px;width:251px;height:18px"><span class="t" style="transform:scaleX(0.9455);">RPI_GPIO.20 from RPI_GPIO</span></div>
<div class="cell" style="left:646.5px;top:310px;width:60px;height:18px"><span class="t" style="transform:scaleX(1.1211);">In</span></div>
<svg class="ic" style="left:730px;top:313px" width="16" height="12" viewBox="0 0 16 12"><path d="M0 0H16V12H7V11H0Z" fill="#077a53"/><path d="M0.5 0.5H15.5" stroke="#2bb98a" stroke-width="1"/><path d="M7 5.5V11.5H15.5V0.5" stroke="#056a45" stroke-width="1" fill="none"/><rect x="6.5" y="1.5" width="3.5" height="7.5" fill="#04633f" opacity="0.75"/><rect x="10" y="6.2" width="5" height="2.6" fill="#04633f" opacity="0.6"/><rect x="10" y="2" width="4" height="4" fill="#e9f7ef"/><rect x="11" y="3" width="3" height="3" fill="#bfe3d0"/><rect x="1" y="2" width="1" height="1" fill="#fff"/><rect x="3" y="2" width="3" height="1" fill="#f4f4f4"/><rect x="1" y="4" width="1" height="1" fill="#fff"/><rect x="3" y="4" width="3" height="1" fill="#f4f4f4"/><rect x="1" y="6" width="1" height="1" fill="#fff"/><rect x="3" y="6" width="3" height="1" fill="#f4f4f4"/><rect x="1" y="8" width="1" height="1" fill="#fff"/><rect x="3" y="8" width="3" height="1" fill="#f4f4f4"/><rect x="7" y="3" width="2" height="1" fill="#2fcf9a"/><rect x="7" y="5" width="2" height="1" fill="#2fcf9a"/><rect x="7" y="7" width="3" height="1" fill="#25b585"/><rect x="8" y="9" width="1" height="2" fill="#fdf6b8"/><rect x="10" y="9" width="1" height="2" fill="#fdf6b8"/><rect x="12" y="9" width="1" height="2" fill="#fdf6b8"/><rect x="14" y="9" width="1" height="2" fill="#fdf6b8"/></svg>
<div class="cell" style="left:750px;top:310px;width:240px;height:18px"><span class="t" style="transform:scaleX(0.9566);">Kame_MB.PcbDoc</span></div>
<div class="cb" style="top:329px"><svg width="14" height="14" viewBox="0 0 14 14"><path d="M3 6.2L6.95 8.85L11 4.1" fill="none" stroke="#f2f2f2" stroke-width="1.2"/></svg></div>
<div class="cell" style="left:128px;top:328px;width:240px;height:18px"><span class="t" style="transform:scaleX(0.991);">Remove</span></div>
<svg class="ic" style="left:373px;top:332px" width="16" height="10" viewBox="0 0 16 10"><path d="M0 1H7.5L10.5 4H16" fill="none" stroke="#5a9af2" stroke-width="2"/><path d="M0 6H7.5L10.5 9H16" fill="none" stroke="#3f74e6" stroke-width="2"/></svg>
<div class="cell" style="left:393px;top:328px;width:251px;height:18px"><span class="t" style="transform:scaleX(0.9455);">RPI_GPIO.21 from RPI_GPIO</span></div>
<div class="cell" style="left:646.5px;top:328px;width:60px;height:18px"><span class="t" style="transform:scaleX(1.1211);">In</span></div>
<svg class="ic" style="left:730px;top:331px" width="16" height="12" viewBox="0 0 16 12"><path d="M0 0H16V12H7V11H0Z" fill="#077a53"/><path d="M0.5 0.5H15.5" stroke="#2bb98a" stroke-width="1"/><path d="M7 5.5V11.5H15.5V0.5" stroke="#056a45" stroke-width="1" fill="none"/><rect x="6.5" y="1.5" width="3.5" height="7.5" fill="#04633f" opacity="0.75"/><rect x="10" y="6.2" width="5" height="2.6" fill="#04633f" opacity="0.6"/><rect x="10" y="2" width="4" height="4" fill="#e9f7ef"/><rect x="11" y="3" width="3" height="3" fill="#bfe3d0"/><rect x="1" y="2" width="1" height="1" fill="#fff"/><rect x="3" y="2" width="3" height="1" fill="#f4f4f4"/><rect x="1" y="4" width="1" height="1" fill="#fff"/><rect x="3" y="4" width="3" height="1" fill="#f4f4f4"/><rect x="1" y="6" width="1" height="1" fill="#fff"/><rect x="3" y="6" width="3" height="1" fill="#f4f4f4"/><rect x="1" y="8" width="1" height="1" fill="#fff"/><rect x="3" y="8" width="3" height="1" fill="#f4f4f4"/><rect x="7" y="3" width="2" height="1" fill="#2fcf9a"/><rect x="7" y="5" width="2" height="1" fill="#2fcf9a"/><rect x="7" y="7" width="3" height="1" fill="#25b585"/><rect x="8" y="9" width="1" height="2" fill="#fdf6b8"/><rect x="10" y="9" width="1" height="2" fill="#fdf6b8"/><rect x="12" y="9" width="1" height="2" fill="#fdf6b8"/><rect x="14" y="9" width="1" height="2" fill="#fdf6b8"/></svg>
<div class="cell" style="left:750px;top:328px;width:240px;height:18px"><span class="t" style="transform:scaleX(0.9566);">Kame_MB.PcbDoc</span></div>
<div class="g" style="top:346px"></div>
<svg class="ic" style="left:21px;top:352px" width="6" height="6" viewBox="0 0 6 6"><path d="M6 0.3V6H0.3Z" fill="#fafafa"/></svg>
<svg class="ic" style="left:34px;top:349px" width="14" height="12" viewBox="0 0 14 12"><path d="M0 2.4Q0.3 1.2 1.6 0.9L2.2 0.1H5.9Q7 0.9 7.7 2H14V12H0Z" fill="#cf4719"/><path d="M1 2.2L2.2 1H5.7L7.1 3H13V11H1Z" fill="url(#fg)"/><path d="M2.2 1.5H5.5M7.4 3.5H13" stroke="#f6c9ad" stroke-width="1" fill="none"/><path d="M1.5 2.5V10.8" stroke="#f3b296" stroke-width="1"/></svg>
<div class="cell" style="left:128px;top:346px;width:500px;height:18px"><span class="t" style="transform:scaleX(1.0073);">Add Net Class Members(55)</span></div>
<div class="cb" style="top:365px"><svg width="14" height="14" viewBox="0 0 14 14"><path d="M3 6.2L6.95 8.85L11 4.1" fill="none" stroke="#f2f2f2" stroke-width="1.2"/></svg></div>
<div class="cell" style="left:128px;top:364px;width:240px;height:18px"><span class="t" style="transform:scaleX(1.1339);">Add</span></div>
<svg class="ic" style="left:373px;top:368px" width="16" height="10" viewBox="0 0 16 10"><path d="M0 1H7.5L10.5 4H16" fill="none" stroke="#5a9af2" stroke-width="2"/><path d="M0 6H7.5L10.5 9H16" fill="none" stroke="#3f74e6" stroke-width="2"/></svg>
<div class="cell" style="left:393px;top:364px;width:251px;height:18px"><span class="t" style="transform:scaleX(0.9413);">BMC_RST#_R to BMC_I2C2</span></div>
<div class="cell" style="left:646.5px;top:364px;width:60px;height:18px"><span class="t" style="transform:scaleX(1.1211);">In</span></div>
<svg class="ic" style="left:730px;top:367px" width="16" height="12" viewBox="0 0 16 12"><path d="M0 0H16V12H7V11H0Z" fill="#077a53"/><path d="M0.5 0.5H15.5" stroke="#2bb98a" stroke-width="1"/><path d="M7 5.5V11.5H15.5V0.5" stroke="#056a45" stroke-width="1" fill="none"/><rect x="6.5" y="1.5" width="3.5" height="7.5" fill="#04633f" opacity="0.75"/><rect x="10" y="6.2" width="5" height="2.6" fill="#04633f" opacity="0.6"/><rect x="10" y="2" width="4" height="4" fill="#e9f7ef"/><rect x="11" y="3" width="3" height="3" fill="#bfe3d0"/><rect x="1" y="2" width="1" height="1" fill="#fff"/><rect x="3" y="2" width="3" height="1" fill="#f4f4f4"/><rect x="1" y="4" width="1" height="1" fill="#fff"/><rect x="3" y="4" width="3" height="1" fill="#f4f4f4"/><rect x="1" y="6" width="1" height="1" fill="#fff"/><rect x="3" y="6" width="3" height="1" fill="#f4f4f4"/><rect x="1" y="8" width="1" height="1" fill="#fff"/><rect x="3" y="8" width="3" height="1" fill="#f4f4f4"/><rect x="7" y="3" width="2" height="1" fill="#2fcf9a"/><rect x="7" y="5" width="2" height="1" fill="#2fcf9a"/><rect x="7" y="7" width="3" height="1" fill="#25b585"/><rect x="8" y="9" width="1" height="2" fill="#fdf6b8"/><rect x="10" y="9" width="1" height="2" fill="#fdf6b8"/><rect x="12" y="9" width="1" height="2" fill="#fdf6b8"/><rect x="14" y="9" width="1" height="2" fill="#fdf6b8"/></svg>
<div class="cell" style="left:750px;top:364px;width:240px;height:18px"><span class="t" style="transform:scaleX(0.9566);">Kame_MB.PcbDoc</span></div>
<div class="cb" style="top:383px"><svg width="14" height="14" viewBox="0 0 14 14"><path d="M3 6.2L6.95 8.85L11 4.1" fill="none" stroke="#f2f2f2" stroke-width="1.2"/></svg></div>
<div class="cell" style="left:128px;top:382px;width:240px;height:18px"><span class="t" style="transform:scaleX(1.1339);">Add</span></div>
<svg class="ic" style="left:373px;top:386px" width="16" height="10" viewBox="0 0 16 10"><path d="M0 1H7.5L10.5 4H16" fill="none" stroke="#5a9af2" stroke-width="2"/><path d="M0 6H7.5L10.5 9H16" fill="none" stroke="#3f74e6" stroke-width="2"/></svg>
<div class="cell" style="left:393px;top:382px;width:251px;height:18px"><span class="t" style="transform:scaleX(0.9525);">BMC_RST# to BMC_I2C2</span></div>
<div class="cell" style="left:646.5px;top:382px;width:60px;height:18px"><span class="t" style="transform:scaleX(1.1211);">In</span></div>
<svg class="ic" style="left:730px;top:385px" width="16" height="12" viewBox="0 0 16 12"><path d="M0 0H16V12H7V11H0Z" fill="#077a53"/><path d="M0.5 0.5H15.5" stroke="#2bb98a" stroke-width="1"/><path d="M7 5.5V11.5H15.5V0.5" stroke="#056a45" stroke-width="1" fill="none"/><rect x="6.5" y="1.5" width="3.5" height="7.5" fill="#04633f" opacity="0.75"/><rect x="10" y="6.2" width="5" height="2.6" fill="#04633f" opacity="0.6"/><rect x="10" y="2" width="4" height="4" fill="#e9f7ef"/><rect x="11" y="3" width="3" height="3" fill="#bfe3d0"/><rect x="1" y="2" width="1" height="1" fill="#fff"/><rect x="3" y="2" width="3" height="1" fill="#f4f4f4"/><rect x="1" y="4" width="1" height="1" fill="#fff"/><rect x="3" y="4" width="3" height="1" fill="#f4f4f4"/><rect x="1" y="6" width="1" height="1" fill="#fff"/><rect x="3" y="6" width="3" height="1" fill="#f4f4f4"/><rect x="1" y="8" width="1" height="1" fill="#fff"/><rect x="3" y="8" width="3" height="1" fill="#f4f4f4"/><rect x="7" y="3" width="2" height="1" fill="#2fcf9a"/><rect x="7" y="5" width="2" height="1" fill="#2fcf9a"/><rect x="7" y="7" width="3" height="1" fill="#25b585"/><rect x="8" y="9" width="1" height="2" fill="#fdf6b8"/><rect x="10" y="9" width="1" height="2" fill="#fdf6b8"/><rect x="12" y="9" width="1" height="2" fill="#fdf6b8"/><rect x="14" y="9" width="1" height="2" fill="#fdf6b8"/></svg>
<div class="cell" style="left:750px;top:382px;width:240px;height:18px"><span class="t" style="transform:scaleX(0.9566);">Kame_MB.PcbDoc</span></div>
<div class="cb" style="top:401px"><svg width="14" height="14" viewBox="0 0 14 14"><path d="M3 6.2L6.95 8.85L11 4.1" fill="none" stroke="#f2f2f2" stroke-width="1.2"/></svg></div>
<div class="cell" style="left:128px;top:400px;width:240px;height:18px"><span class="t" style="transform:scaleX(1.1339);">Add</span></div>
<svg class="ic" style="left:373px;top:404px" width="16" height="10" viewBox="0 0 16 10"><path d="M0 1H7.5L10.5 4H16" fill="none" stroke="#5a9af2" stroke-width="2"/><path d="M0 6H7.5L10.5 9H16" fill="none" stroke="#3f74e6" stroke-width="2"/></svg>
<div class="cell" style="left:393px;top:400px;width:251px;height:18px"><span class="t" style="transform:scaleX(0.944);">BMC_SWDCLK to BMC_I2C2</span></div>
<div class="cell" style="left:646.5px;top:400px;width:60px;height:18px"><span class="t" style="transform:scaleX(1.1211);">In</span></div>
<svg class="ic" style="left:730px;top:403px" width="16" height="12" viewBox="0 0 16 12"><path d="M0 0H16V12H7V11H0Z" fill="#077a53"/><path d="M0.5 0.5H15.5" stroke="#2bb98a" stroke-width="1"/><path d="M7 5.5V11.5H15.5V0.5" stroke="#056a45" stroke-width="1" fill="none"/><rect x="6.5" y="1.5" width="3.5" height="7.5" fill="#04633f" opacity="0.75"/><rect x="10" y="6.2" width="5" height="2.6" fill="#04633f" opacity="0.6"/><rect x="10" y="2" width="4" height="4" fill="#e9f7ef"/><rect x="11" y="3" width="3" height="3" fill="#bfe3d0"/><rect x="1" y="2" width="1" height="1" fill="#fff"/><rect x="3" y="2" width="3" height="1" fill="#f4f4f4"/><rect x="1" y="4" width="1" height="1" fill="#fff"/><rect x="3" y="4" width="3" height="1" fill="#f4f4f4"/><rect x="1" y="6" width="1" height="1" fill="#fff"/><rect x="3" y="6" width="3" height="1" fill="#f4f4f4"/><rect x="1" y="8" width="1" height="1" fill="#fff"/><rect x="3" y="8" width="3" height="1" fill="#f4f4f4"/><rect x="7" y="3" width="2" height="1" fill="#2fcf9a"/><rect x="7" y="5" width="2" height="1" fill="#2fcf9a"/><rect x="7" y="7" width="3" height="1" fill="#25b585"/><rect x="8" y="9" width="1" height="2" fill="#fdf6b8"/><rect x="10" y="9" width="1" height="2" fill="#fdf6b8"/><rect x="12" y="9" width="1" height="2" fill="#fdf6b8"/><rect x="14" y="9" width="1" height="2" fill="#fdf6b8"/></svg>
<div class="cell" style="left:750px;top:400px;width:240px;height:18px"><span class="t" style="transform:scaleX(0.9566);">Kame_MB.PcbDoc</span></div>
<div class="cb" style="top:419px"><svg width="14" height="14" viewBox="0 0 14 14"><path d="M3 6.2L6.95 8.85L11 4.1" fill="none" stroke="#f2f2f2" stroke-width="1.2"/></svg></div>
<div class="cell" style="left:128px;top:418px;width:240px;height:18px"><span class="t" style="transform:scaleX(1.1339);">Add</span></div>
<svg class="ic" style="left:373px;top:422px" width="16" height="10" viewBox="0 0 16 10"><path d="M0 1H7.5L10.5 4H16" fill="none" stroke="#5a9af2" stroke-width="2"/><path d="M0 6H7.5L10.5 9H16" fill="none" stroke="#3f74e6" stroke-width="2"/></svg>
<div class="cell" style="left:393px;top:418px;width:251px;height:18px"><span class="t" style="transform:scaleX(0.9677);">BMC_SWDIO to BMC_I2C2</span></div>
<div class="cell" style="left:646.5px;top:418px;width:60px;height:18px"><span class="t" style="transform:scaleX(1.1211);">In</span></div>
<svg class="ic" style="left:730px;top:421px" width="16" height="12" viewBox="0 0 16 12"><path d="M0 0H16V12H7V11H0Z" fill="#077a53"/><path d="M0.5 0.5H15.5" stroke="#2bb98a" stroke-width="1"/><path d="M7 5.5V11.5H15.5V0.5" stroke="#056a45" stroke-width="1" fill="none"/><rect x="6.5" y="1.5" width="3.5" height="7.5" fill="#04633f" opacity="0.75"/><rect x="10" y="6.2" width="5" height="2.6" fill="#04633f" opacity="0.6"/><rect x="10" y="2" width="4" height="4" fill="#e9f7ef"/><rect x="11" y="3" width="3" height="3" fill="#bfe3d0"/><rect x="1" y="2" width="1" height="1" fill="#fff"/><rect x="3" y="2" width="3" height="1" fill="#f4f4f4"/><rect x="1" y="4" width="1" height="1" fill="#fff"/><rect x="3" y="4" width="3" height="1" fill="#f4f4f4"/><rect x="1" y="6" width="1" height="1" fill="#fff"/><rect x="3" y="6" width="3" height="1" fill="#f4f4f4"/><rect x="1" y="8" width="1" height="1" fill="#fff"/><rect x="3" y="8" width="3" height="1" fill="#f4f4f4"/><rect x="7" y="3" width="2" height="1" fill="#2fcf9a"/><rect x="7" y="5" width="2" height="1" fill="#2fcf9a"/><rect x="7" y="7" width="3" height="1" fill="#25b585"/><rect x="8" y="9" width="1" height="2" fill="#fdf6b8"/><rect x="10" y="9" width="1" height="2" fill="#fdf6b8"/><rect x="12" y="9" width="1" height="2" fill="#fdf6b8"/><rect x="14" y="9" width="1" height="2" fill="#fdf6b8"/></svg>
<div class="cell" style="left:750px;top:418px;width:240px;height:18px"><span class="t" style="transform:scaleX(0.9566);">Kame_MB.PcbDoc</span></div>
<div class="cb" style="top:437px"><svg width="14" height="14" viewBox="0 0 14 14"><path d="M3 6.2L6.95 8.85L11 4.1" fill="none" stroke="#f2f2f2" stroke-width="1.2"/></svg></div>
<div class="cell" style="left:128px;top:436px;width:240px;height:18px"><span class="t" style="transform:scaleX(1.1339);">Add</span></div>
<svg class="ic" style="left:373px;top:440px" width="16" height="10" viewBox="0 0 16 10"><path d="M0 1H7.5L10.5 4H16" fill="none" stroke="#5a9af2" stroke-width="2"/><path d="M0 6H7.5L10.5 9H16" fill="none" stroke="#3f74e6" stroke-width="2"/></svg>
<div class="cell" style="left:393px;top:436px;width:251px;height:18px"><span class="t" style="transform:scaleX(0.9397);">BMC_UART1_RX to UART1</span></div>
<div class="cell" style="left:646.5px;top:436px;width:60px;height:18px"><span class="t" style="transform:scaleX(1.1211);">In</span></div>
<svg class="ic" style="left:730px;top:439px" width="16" height="12" viewBox="0 0 16 12"><path d="M0 0H16V12H7V11H0Z" fill="#077a53"/><path d="M0.5 0.5H15.5" stroke="#2bb98a" stroke-width="1"/><path d="M7 5.5V11.5H15.5V0.5" stroke="#056a45" stroke-width="1" fill="none"/><rect x="6.5" y="1.5" width="3.5" height="7.5" fill="#04633f" opacity="0.75"/><rect x="10" y="6.2" width="5" height="2.6" fill="#04633f" opacity="0.6"/><rect x="10" y="2" width="4" height="4" fill="#e9f7ef"/><rect x="11" y="3" width="3" height="3" fill="#bfe3d0"/><rect x="1" y="2" width="1" height="1" fill="#fff"/><rect x="3" y="2" width="3" height="1" fill="#f4f4f4"/><rect x="1" y="4" width="1" height="1" fill="#fff"/><rect x="3" y="4" width="3" height="1" fill="#f4f4f4"/><rect x="1" y="6" width="1" height="1" fill="#fff"/><rect x="3" y="6" width="3" height="1" fill="#f4f4f4"/><rect x="1" y="8" width="1" height="1" fill="#fff"/><rect x="3" y="8" width="3" height="1" fill="#f4f4f4"/><rect x="7" y="3" width="2" height="1" fill="#2fcf9a"/><rect x="7" y="5" width="2" height="1" fill="#2fcf9a"/><rect x="7" y="7" width="3" height="1" fill="#25b585"/><rect x="8" y="9" width="1" height="2" fill="#fdf6b8"/><rect x="10" y="9" width="1" height="2" fill="#fdf6b8"/><rect x="12" y="9" width="1" height="2" fill="#fdf6b8"/><rect x="14" y="9" width="1" height="2" fill="#fdf6b8"/></svg>
<div class="cell" style="left:750px;top:436px;width:240px;height:18px"><span class="t" style="transform:scaleX(0.9566);">Kame_MB.PcbDoc</span></div>
<div class="cb" style="top:455px"><svg width="14" height="14" viewBox="0 0 14 14"><path d="M3 6.2L6.95 8.85L11 4.1" fill="none" stroke="#f2f2f2" stroke-width="1.2"/></svg></div>
<div class="cell" style="left:128px;top:454px;width:240px;height:18px"><span class="t" style="transform:scaleX(1.1339);">Add</span></div>
<svg class="ic" style="left:373px;top:458px" width="16" height="10" viewBox="0 0 16 10"><path d="M0 1H7.5L10.5 4H16" fill="none" stroke="#5a9af2" stroke-width="2"/><path d="M0 6H7.5L10.5 9H16" fill="none" stroke="#3f74e6" stroke-width="2"/></svg>
<div class="cell" style="left:393px;top:454px;width:251px;height:18px"><span class="t" style="transform:scaleX(0.9423);">BMC_UART1_TX to UART1</span></div>
<div class="cell" style="left:646.5px;top:454px;width:60px;height:18px"><span class="t" style="transform:scaleX(1.1211);">In</span></div>
<svg class="ic" style="left:730px;top:457px" width="16" height="12" viewBox="0 0 16 12"><path d="M0 0H16V12H7V11H0Z" fill="#077a53"/><path d="M0.5 0.5H15.5" stroke="#2bb98a" stroke-width="1"/><path d="M7 5.5V11.5H15.5V0.5" stroke="#056a45" stroke-width="1" fill="none"/><rect x="6.5" y="1.5" width="3.5" height="7.5" fill="#04633f" opacity="0.75"/><rect x="10" y="6.2" width="5" height="2.6" fill="#04633f" opacity="0.6"/><rect x="10" y="2" width="4" height="4" fill="#e9f7ef"/><rect x="11" y="3" width="3" height="3" fill="#bfe3d0"/><rect x="1" y="2" width="1" height="1" fill="#fff"/><rect x="3" y="2" width="3" height="1" fill="#f4f4f4"/><rect x="1" y="4" width="1" height="1" fill="#fff"/><rect x="3" y="4" width="3" height="1" fill="#f4f4f4"/><rect x="1" y="6" width="1" height="1" fill="#fff"/><rect x="3" y="6" width="3" height="1" fill="#f4f4f4"/><rect x="1" y="8" width="1" height="1" fill="#fff"/><rect x="3" y="8" width="3" height="1" fill="#f4f4f4"/><rect x="7" y="3" width="2" height="1" fill="#2fcf9a"/><rect x="7" y="5" width="2" height="1" fill="#2fcf9a"/><rect x="7" y="7" width="3" height="1" fill="#25b585"/><rect x="8" y="9" width="1" height="2" fill="#fdf6b8"/><rect x="10" y="9" width="1" height="2" fill="#fdf6b8"/><rect x="12" y="9" width="1" height="2" fill="#fdf6b8"/><rect x="14" y="9" width="1" height="2" fill="#fdf6b8"/></svg>
<div class="cell" style="left:750px;top:454px;width:240px;height:18px"><span class="t" style="transform:scaleX(0.9566);">Kame_MB.PcbDoc</span></div>
<div class="cb" style="top:472px"><svg width="14" height="14" viewBox="0 0 14 14"><path d="M3 6.2L6.95 8.85L11 4.1" fill="none" stroke="#f2f2f2" stroke-width="1.2"/></svg></div>
<div class="cell" style="left:128px;top:471px;width:240px;height:18px"><span class="t" style="transform:scaleX(1.1339);">Add</span></div>
<svg class="ic" style="left:373px;top:475px" width="16" height="10" viewBox="0 0 16 10"><path d="M0 1H7.5L10.5 4H16" fill="none" stroke="#5a9af2" stroke-width="2"/><path d="M0 6H7.5L10.5 9H16" fill="none" stroke="#3f74e6" stroke-width="2"/></svg>
<div class="cell" style="left:393px;top:471px;width:251px;height:18px"><span class="t" style="transform:scaleX(0.9027);">VCC5_EXP1 to EXP1</span></div>
<div class="cell" style="left:646.5px;top:471px;width:60px;height:18px"><span class="t" style="transform:scaleX(1.1211);">In</span></div>
<svg class="ic" style="left:730px;top:474px" width="16" height="12" viewBox="0 0 16 12"><path d="M0 0H16V12H7V11H0Z" fill="#077a53"/><path d="M0.5 0.5H15.5" stroke="#2bb98a" stroke-width="1"/><path d="M7 5.5V11.5H15.5V0.5" stroke="#056a45" stroke-width="1" fill="none"/><rect x="6.5" y="1.5" width="3.5" height="7.5" fill="#04633f" opacity="0.75"/><rect x="10" y="6.2" width="5" height="2.6" fill="#04633f" opacity="0.6"/><rect x="10" y="2" width="4" height="4" fill="#e9f7ef"/><rect x="11" y="3" width="3" height="3" fill="#bfe3d0"/><rect x="1" y="2" width="1" height="1" fill="#fff"/><rect x="3" y="2" width="3" height="1" fill="#f4f4f4"/><rect x="1" y="4" width="1" height="1" fill="#fff"/><rect x="3" y="4" width="3" height="1" fill="#f4f4f4"/><rect x="1" y="6" width="1" height="1" fill="#fff"/><rect x="3" y="6" width="3" height="1" fill="#f4f4f4"/><rect x="1" y="8" width="1" height="1" fill="#fff"/><rect x="3" y="8" width="3" height="1" fill="#f4f4f4"/><rect x="7" y="3" width="2" height="1" fill="#2fcf9a"/><rect x="7" y="5" width="2" height="1" fill="#2fcf9a"/><rect x="7" y="7" width="3" height="1" fill="#25b585"/><rect x="8" y="9" width="1" height="2" fill="#fdf6b8"/><rect x="10" y="9" width="1" height="2" fill="#fdf6b8"/><rect x="12" y="9" width="1" height="2" fill="#fdf6b8"/><rect x="14" y="9" width="1" height="2" fill="#fdf6b8"/></svg>
<div class="cell" style="left:750px;top:471px;width:240px;height:18px"><span class="t" style="transform:scaleX(0.9566);">Kame_MB.PcbDoc</span></div>
<div class="g" style="top:489px"></div>
<svg class="ic" style="left:21px;top:495px" width="6" height="6" viewBox="0 0 6 6"><path d="M6 0.3V6H0.3Z" fill="#fafafa"/></svg>
<svg class="ic" style="left:34px;top:492px" width="14" height="12" viewBox="0 0 14 12"><path d="M0 2.4Q0.3 1.2 1.6 0.9L2.2 0.1H5.9Q7 0.9 7.7 2H14V12H0Z" fill="#cf4719"/><path d="M1 2.2L2.2 1H5.7L7.1 3H13V11H1Z" fill="url(#fg)"/><path d="M2.2 1.5H5.5M7.4 3.5H13" stroke="#f6c9ad" stroke-width="1" fill="none"/><path d="M1.5 2.5V10.8" stroke="#f3b296" stroke-width="1"/></svg>
<div class="cell" style="left:128px;top:489px;width:500px;height:18px"><span class="t" style="transform:scaleX(1.0094);">Add Rules(1108)</span></div>
<div class="cb" style="top:508px"><svg width="14" height="14" viewBox="0 0 14 14"><path d="M3 6.2L6.95 8.85L11 4.1" fill="none" stroke="#f2f2f2" stroke-width="1.2"/></svg></div>
<div class="cell" style="left:128px;top:507px;width:240px;height:18px"><span class="t" style="transform:scaleX(1.1339);">Add</span></div>
<svg class="ic" style="left:373px;top:511px" width="16" height="9" viewBox="0 0 16 9"><path d="M0 2.5H3M0 6.5H3M12 4.5H16" stroke="#d2aa48" stroke-width="1" fill="none"/><path d="M3 0H10L12.4 2.6V6.4L10 9H3Z" fill="#d6ab42"/><path d="M4 1H9.5L11.4 3V6L9.5 8H4Z" fill="#f0d680"/><path d="M4 1H5.5V8H4Z" fill="#fbefc5"/></svg>
<div class="cell" style="left:393px;top:507px;width:251px;height:18px"><span class="t" style="transform:scaleX(1.052);">Differential Pairs Routing [Pref Gap = 5.118mil    Min Gap = 5.118mil    Max Gap = 5.118mil]</span></div>
<div class="cell" style="left:646.5px;top:507px;width:60px;height:18px"><span class="t" style="transform:scaleX(1.1871);">To</span></div>
<svg class="ic" style="left:730px;top:510px" width="16" height="12" viewBox="0 0 16 12"><path d="M0 0H16V12H7V11H0Z" fill="#077a53"/><path d="M0.5 0.5H15.5" stroke="#2bb98a" stroke-width="1"/><path d="M7 5.5V11.5H15.5V0.5" stroke="#056a45" stroke-width="1" fill="none"/><rect x="6.5" y="1.5" width="3.5" height="7.5" fill="#04633f" opacity="0.75"/><rect x="10" y="6.2" width="5" height="2.6" fill="#04633f" opacity="0.6"/><rect x="10" y="2" width="4" height="4" fill="#e9f7ef"/><rect x="11" y="3" width="3" height="3" fill="#bfe3d0"/><rect x="1" y="2" width="1" height="1" fill="#fff"/><rect x="3" y="2" width="3" height="1" fill="#f4f4f4"/><rect x="1" y="4" width="1" height="1" fill="#fff"/><rect x="3" y="4" width="3" height="1" fill="#f4f4f4"/><rect x="1" y="6" width="1" height="1" fill="#fff"/><rect x="3" y="6" width="3" height="1" fill="#f4f4f4"/><rect x="1" y="8" width="1" height="1" fill="#fff"/><rect x="3" y="8" width="3" height="1" fill="#f4f4f4"/><rect x="7" y="3" width="2" height="1" fill="#2fcf9a"/><rect x="7" y="5" width="2" height="1" fill="#2fcf9a"/><rect x="7" y="7" width="3" height="1" fill="#25b585"/><rect x="8" y="9" width="1" height="2" fill="#fdf6b8"/><rect x="10" y="9" width="1" height="2" fill="#fdf6b8"/><rect x="12" y="9" width="1" height="2" fill="#fdf6b8"/><rect x="14" y="9" width="1" height="2" fill="#fdf6b8"/></svg>
<div class="cell" style="left:750px;top:507px;width:240px;height:18px"><span class="t" style="transform:scaleX(0.9566);">Kame_MB.PcbDoc</span></div>
<div class="cb" style="top:526px"><svg width="14" height="14" viewBox="0 0 14 14"><path d="M3 6.2L6.95 8.85L11 4.1" fill="none" stroke="#f2f2f2" stroke-width="1.2"/></svg></div>
<div class="cell" style="left:128px;top:525px;width:240px;height:18px"><span class="t" style="transform:scaleX(1.1339);">Add</span></div>
<svg class="ic" style="left:373px;top:529px" width="16" height="9" viewBox="0 0 16 9"><path d="M0 2.5H3M0 6.5H3M12 4.5H16" stroke="#d2aa48" stroke-width="1" fill="none"/><path d="M3 0H10L12.4 2.6V6.4L10 9H3Z" fill="#d6ab42"/><path d="M4 1H9.5L11.4 3V6L9.5 8H4Z" fill="#f0d680"/><path d="M4 1H5.5V8H4Z" fill="#fbefc5"/></svg>
<div class="cell" style="left:393px;top:525px;width:251px;height:18px"><span class="t" style="transform:scaleX(1.0526);">Differential Pairs Routing [Pref Gap = 10mil    Min Gap = 10mil    Max Gap = 10mil]</span></div>
<div class="cell" style="left:646.5px;top:525px;width:60px;height:18px"><span class="t" style="transform:scaleX(1.1871);">To</span></div>
<svg class="ic" style="left:730px;top:528px" width="16" height="12" viewBox="0 0 16 12"><path d="M0 0H16V12H7V11H0Z" fill="#077a53"/><path d="M0.5 0.5H15.5" stroke="#2bb98a" stroke-width="1"/><path d="M7 5.5V11.5H15.5V0.5" stroke="#056a45" stroke-width="1" fill="none"/><rect x="6.5" y="1.5" width="3.5" height="7.5" fill="#04633f" opacity="0.75"/><rect x="10" y="6.2" width="5" height="2.6" fill="#04633f" opacity="0.6"/><rect x="10" y="2" width="4" height="4" fill="#e9f7ef"/><rect x="11" y="3" width="3" height="3" fill="#bfe3d0"/><rect x="1" y="2" width="1" height="1" fill="#fff"/><rect x="3" y="2" width="3" height="1" fill="#f4f4f4"/><rect x="1" y="4" width="1" height="1" fill="#fff"/><rect x="3" y="4" width="3" height="1" fill="#f4f4f4"/><rect x="1" y="6" width="1" height="1" fill="#fff"/><rect x="3" y="6" width="3" height="1" fill="#f4f4f4"/><rect x="1" y="8" width="1" height="1" fill="#fff"/><rect x="3" y="8" width="3" height="1" fill="#f4f4f4"/><rect x="7" y="3" width="2" height="1" fill="#2fcf9a"/><rect x="7" y="5" width="2" height="1" fill="#2fcf9a"/><rect x="7" y="7" width="3" height="1" fill="#25b585"/><rect x="8" y="9" width="1" height="2" fill="#fdf6b8"/><rect x="10" y="9" width="1" height="2" fill="#fdf6b8"/><rect x="12" y="9" width="1" height="2" fill="#fdf6b8"/><rect x="14" y="9" width="1" height="2" fill="#fdf6b8"/></svg>
<div class="cell" style="left:750px;top:525px;width:240px;height:18px"><span class="t" style="transform:scaleX(0.9566);">Kame_MB.PcbDoc</span></div>
<div class="cb" style="top:544px"><svg width="14" height="14" viewBox="0 0 14 14"><path d="M3 6.2L6.95 8.85L11 4.1" fill="none" stroke="#f2f2f2" stroke-width="1.2"/></svg></div>
<div class="cell" style="left:128px;top:543px;width:240px;height:18px"><span class="t" style="transform:scaleX(1.1339);">Add</span></div>
<svg class="ic" style="left:373px;top:547px" width="16" height="9" viewBox="0 0 16 9"><path d="M0 2.5H3M0 6.5H3M12 4.5H16" stroke="#d2aa48" stroke-width="1" fill="none"/><path d="M3 0H10L12.4 2.6V6.4L10 9H3Z" fill="#d6ab42"/><path d="M4 1H9.5L11.4 3V6L9.5 8H4Z" fill="#f0d680"/><path d="M4 1H5.5V8H4Z" fill="#fbefc5"/></svg>
<div class="cell" style="left:393px;top:543px;width:251px;height:18px"><span class="t" style="transform:scaleX(1.046);">Differential Pairs Routing [Pref Gap = 15.748mil    Min Gap = 15.748mil    Max Gap = 15.748mil]</span></div>
<div class="cell" style="left:646.5px;top:543px;width:60px;height:18px"><span class="t" style="transform:scaleX(1.1871);">To</span></div>
<svg class="ic" style="left:730px;top:546px" width="16" height="12" viewBox="0 0 16 12"><path d="M0 0H16V12H7V11H0Z" fill="#077a53"/><path d="M0.5 0.5H15.5" stroke="#2bb98a" stroke-width="1"/><path d="M7 5.5V11.5H15.5V0.5" stroke="#056a45" stroke-width="1" fill="none"/><rect x="6.5" y="1.5" width="3.5" height="7.5" fill="#04633f" opacity="0.75"/><rect x="10" y="6.2" width="5" height="2.6" fill="#04633f" opacity="0.6"/><rect x="10" y="2" width="4" height="4" fill="#e9f7ef"/><rect x="11" y="3" width="3" height="3" fill="#bfe3d0"/><rect x="1" y="2" width="1" height="1" fill="#fff"/><rect x="3" y="2" width="3" height="1" fill="#f4f4f4"/><rect x="1" y="4" width="1" height="1" fill="#fff"/><rect x="3" y="4" width="3" height="1" fill="#f4f4f4"/><rect x="1" y="6" width="1" height="1" fill="#fff"/><rect x="3" y="6" width="3" height="1" fill="#f4f4f4"/><rect x="1" y="8" width="1" height="1" fill="#fff"/><rect x="3" y="8" width="3" height="1" fill="#f4f4f4"/><rect x="7" y="3" width="2" height="1" fill="#2fcf9a"/><rect x="7" y="5" width="2" height="1" fill="#2fcf9a"/><rect x="7" y="7" width="3" height="1" fill="#25b585"/><rect x="8" y="9" width="1" height="2" fill="#fdf6b8"/><rect x="10" y="9" width="1" height="2" fill="#fdf6b8"/><rect x="12" y="9" width="1" height="2" fill="#fdf6b8"/><rect x="14" y="9" width="1" height="2" fill="#fdf6b8"/></svg>
<div class="cell" style="left:750px;top:543px;width:240px;height:18px"><span class="t" style="transform:scaleX(0.9566);">Kame_MB.PcbDoc</span></div>
<div class="cb" style="top:562px"><svg width="14" height="14" viewBox="0 0 14 14"><path d="M3 6.2L6.95 8.85L11 4.1" fill="none" stroke="#f2f2f2" stroke-width="1.2"/></svg></div>
<div class="cell" style="left:128px;top:561px;width:240px;height:18px"><span class="t" style="transform:scaleX(1.1339);">Add</span></div>
<svg class="ic" style="left:373px;top:565px" width="16" height="9" viewBox="0 0 16 9"><path d="M0 2.5H3M0 6.5H3M12 4.5H16" stroke="#d2aa48" stroke-width="1" fill="none"/><path d="M3 0H10L12.4 2.6V6.4L10 9H3Z" fill="#d6ab42"/><path d="M4 1H9.5L11.4 3V6L9.5 8H4Z" fill="#f0d680"/><path d="M4 1H5.5V8H4Z" fill="#fbefc5"/></svg>
<div class="cell" style="left:393px;top:561px;width:251px;height:18px"><span class="t" style="transform:scaleX(1.0305);">Polygon Connect Style [Style - Relief Connect    Width = 10mil    Angle = 90 Angle    4 Entries]</span></div>
<div class="cell" style="left:646.5px;top:561px;width:60px;height:18px"><span class="t" style="transform:scaleX(1.1871);">To</span></div>
<svg class="ic" style="left:730px;top:564px" width="16" height="12" viewBox="0 0 16 12"><path d="M0 0H16V12H7V11H0Z" fill="#077a53"/><path d="M0.5 0.5H15.5" stroke="#2bb98a" stroke-width="1"/><path d="M7 5.5V11.5H15.5V0.5" stroke="#056a45" stroke-width="1" fill="none"/><rect x="6.5" y="1.5" width="3.5" height="7.5" fill="#04633f" opacity="0.75"/><rect x="10" y="6.2" width="5" height="2.6" fill="#04633f" opacity="0.6"/><rect x="10" y="2" width="4" height="4" fill="#e9f7ef"/><rect x="11" y="3" width="3" height="3" fill="#bfe3d0"/><rect x="1" y="2" width="1" height="1" fill="#fff"/><rect x="3" y="2" width="3" height="1" fill="#f4f4f4"/><rect x="1" y="4" width="1" height="1" fill="#fff"/><rect x="3" y="4" width="3" height="1" fill="#f4f4f4"/><rect x="1" y="6" width="1" height="1" fill="#fff"/><rect x="3" y="6" width="3" height="1" fill="#f4f4f4"/><rect x="1" y="8" width="1" height="1" fill="#fff"/><rect x="3" y="8" width="3" height="1" fill="#f4f4f4"/><rect x="7" y="3" width="2" height="1" fill="#2fcf9a"/><rect x="7" y="5" width="2" height="1" fill="#2fcf9a"/><rect x="7" y="7" width="3" height="1" fill="#25b585"/><rect x="8" y="9" width="1" height="2" fill="#fdf6b8"/><rect x="10" y="9" width="1" height="2" fill="#fdf6b8"/><rect x="12" y="9" width="1" height="2" fill="#fdf6b8"/><rect x="14" y="9" width="1" height="2" fill="#fdf6b8"/></svg>
<div class="cell" style="left:750px;top:561px;width:240px;height:18px"><span class="t" style="transform:scaleX(0.9566);">Kame_MB.PcbDoc</span></div>
<div class="cb" style="top:580px"><svg width="14" height="14" viewBox="0 0 14 14"><path d="M3 6.2L6.95 8.85L11 4.1" fill="none" stroke="#f2f2f2" stroke-width="1.2"/></svg></div>
<div class="cell" style="left:128px;top:579px;width:240px;height:18px"><span class="t" style="transform:scaleX(1.1339);">Add</span></div>
<svg class="ic" style="left:373px;top:583px" width="16" height="9" viewBox="0 0 16 9"><path d="M0 2.5H3M0 6.5H3M12 4.5H16" stroke="#d2aa48" stroke-width="1" fill="none"/><path d="M3 0H10L12.4 2.6V6.4L10 9H3Z" fill="#d6ab42"/><path d="M4 1H9.5L11.4 3V6L9.5 8H4Z" fill="#f0d680"/><path d="M4 1H5.5V8H4Z" fill="#fbefc5"/></svg>
<div class="cell" style="left:393px;top:579px;width:251px;height:18px"><span class="t" style="transform:scaleX(1.0305);">Polygon Connect Style [Style - Relief Connect    Width = 10mil    Angle = 90 Angle    4 Entries]</span></div>
<div class="cell" style="left:646.5px;top:579px;width:60px;height:18px"><span class="t" style="transform:scaleX(1.1871);">To</span></div>
<svg class="ic" style="left:730px;top:582px" width="16" height="12" viewBox="0 0 16 12"><path d="M0 0H16V12H7V11H0Z" fill="#077a53"/><path d="M0.5 0.5H15.5" stroke="#2bb98a" stroke-width="1"/><path d="M7 5.5V11.5H15.5V0.5" stroke="#056a45" stroke-width="1" fill="none"/><rect x="6.5" y="1.5" width="3.5" height="7.5" fill="#04633f" opacity="0.75"/><rect x="10" y="6.2" width="5" height="2.6" fill="#04633f" opacity="0.6"/><rect x="10" y="2" width="4" height="4" fill="#e9f7ef"/><rect x="11" y="3" width="3" height="3" fill="#bfe3d0"/><rect x="1" y="2" width="1" height="1" fill="#fff"/><rect x="3" y="2" width="3" height="1" fill="#f4f4f4"/><rect x="1" y="4" width="1" height="1" fill="#fff"/><rect x="3" y="4" width="3" height="1" fill="#f4f4f4"/><rect x="1" y="6" width="1" height="1" fill="#fff"/><rect x="3" y="6" width="3" height="1" fill="#f4f4f4"/><rect x="1" y="8" width="1" height="1" fill="#fff"/><rect x="3" y="8" width="3" height="1" fill="#f4f4f4"/><rect x="7" y="3" width="2" height="1" fill="#2fcf9a"/><rect x="7" y="5" width="2" height="1" fill="#2fcf9a"/><rect x="7" y="7" width="3" height="1" fill="#25b585"/><rect x="8" y="9" width="1" height="2" fill="#fdf6b8"/><rect x="10" y="9" width="1" height="2" fill="#fdf6b8"/><rect x="12" y="9" width="1" height="2" fill="#fdf6b8"/><rect x="14" y="9" width="1" height="2" fill="#fdf6b8"/></svg>
<div class="cell" style="left:750px;top:579px;width:240px;height:18px"><span class="t" style="transform:scaleX(0.9566);">Kame_MB.PcbDoc</span></div>
<div class="cb" style="top:598px"><svg width="14" height="14" viewBox="0 0 14 14"><path d="M3 6.2L6.95 8.85L11 4.1" fill="none" stroke="#f2f2f2" stroke-width="1.2"/></svg></div>
<div class="cell" style="left:128px;top:597px;width:240px;height:18px"><span class="t" style="transform:scaleX(1.1339);">Add</span></div>
<svg class="ic" style="left:373px;top:601px" width="16" height="9" viewBox="0 0 16 9"><path d="M0 2.5H3M0 6.5H3M12 4.5H16" stroke="#d2aa48" stroke-width="1" fill="none"/><path d="M3 0H10L12.4 2.6V6.4L10 9H3Z" fill="#d6ab42"/><path d="M4 1H9.5L11.4 3V6L9.5 8H4Z" fill="#f0d680"/><path d="M4 1H5.5V8H4Z" fill="#fbefc5"/></svg>
<div class="cell" style="left:393px;top:597px;width:251px;height:18px"><span class="t" style="transform:scaleX(1.0305);">Polygon Connect Style [Style - Relief Connect    Width = 10mil    Angle = 90 Angle    4 Entries]</span></div>
<div class="cell" style="left:646.5px;top:597px;width:60px;height:18px"><span class="t" style="transform:scaleX(1.1871);">To</span></div>
<svg class="ic" style="left:730px;top:600px" width="16" height="12" viewBox="0 0 16 12"><path d="M0 0H16V12H7V11H0Z" fill="#077a53"/><path d="M0.5 0.5H15.5" stroke="#2bb98a" stroke-width="1"/><path d="M7 5.5V11.5H15.5V0.5" stroke="#056a45" stroke-width="1" fill="none"/><rect x="6.5" y="1.5" width="3.5" height="7.5" fill="#04633f" opacity="0.75"/><rect x="10" y="6.2" width="5" height="2.6" fill="#04633f" opacity="0.6"/><rect x="10" y="2" width="4" height="4" fill="#e9f7ef"/><rect x="11" y="3" width="3" height="3" fill="#bfe3d0"/><rect x="1" y="2" width="1" height="1" fill="#fff"/><rect x="3" y="2" width="3" height="1" fill="#f4f4f4"/><rect x="1" y="4" width="1" height="1" fill="#fff"/><rect x="3" y="4" width="3" height="1" fill="#f4f4f4"/><rect x="1" y="6" width="1" height="1" fill="#fff"/><rect x="3" y="6" width="3" height="1" fill="#f4f4f4"/><rect x="1" y="8" width="1" height="1" fill="#fff"/><rect x="3" y="8" width="3" height="1" fill="#f4f4f4"/><rect x="7" y="3" width="2" height="1" fill="#2fcf9a"/><rect x="7" y="5" width="2" height="1" fill="#2fcf9a"/><rect x="7" y="7" width="3" height="1" fill="#25b585"/><rect x="8" y="9" width="1" height="2" fill="#fdf6b8"/><rect x="10" y="9" width="1" height="2" fill="#fdf6b8"/><rect x="12" y="9" width="1" height="2" fill="#fdf6b8"/><rect x="14" y="9" width="1" height="2" fill="#fdf6b8"/></svg>
<div class="cell" style="left:750px;top:597px;width:240px;height:18px"><span class="t" style="transform:scaleX(0.9566);">Kame_MB.PcbDoc</span></div>
<div class="cb" style="top:616px"><svg width="14" height="14" viewBox="0 0 14 14"><path d="M3 6.2L6.95 8.85L11 4.1" fill="none" stroke="#f2f2f2" stroke-width="1.2"/></svg></div>
<div class="cell" style="left:128px;top:615px;width:240px;height:18px"><span class="t" style="transform:scaleX(1.1339);">Add</span></div>
<svg class="ic" style="left:373px;top:619px" width="16" height="9" viewBox="0 0 16 9"><path d="M0 2.5H3M0 6.5H3M12 4.5H16" stroke="#d2aa48" stroke-width="1" fill="none"/><path d="M3 0H10L12.4 2.6V6.4L10 9H3Z" fill="#d6ab42"/><path d="M4 1H9.5L11.4 3V6L9.5 8H4Z" fill="#f0d680"/><path d="M4 1H5.5V8H4Z" fill="#fbefc5"/></svg>
<div class="cell" style="left:393px;top:615px;width:251px;height:18px"><span class="t" style="transform:scaleX(1.0305);">Polygon Connect Style [Style - Relief Connect    Width = 10mil    Angle = 90 Angle    4 Entries]</span></div>
<div class="cell" style="left:646.5px;top:615px;width:60px;height:18px"><span class="t" style="transform:scaleX(1.1871);">To</span></div>
<svg class="ic" style="left:730px;top:618px" width="16" height="12" viewBox="0 0 16 12"><path d="M0 0H16V12H7V11H0Z" fill="#077a53"/><path d="M0.5 0.5H15.5" stroke="#2bb98a" stroke-width="1"/><path d="M7 5.5V11.5H15.5V0.5" stroke="#056a45" stroke-width="1" fill="none"/><rect x="6.5" y="1.5" width="3.5" height="7.5" fill="#04633f" opacity="0.75"/><rect x="10" y="6.2" width="5" height="2.6" fill="#04633f" opacity="0.6"/><rect x="10" y="2" width="4" height="4" fill="#e9f7ef"/><rect x="11" y="3" width="3" height="3" fill="#bfe3d0"/><rect x="1" y="2" width="1" height="1" fill="#fff"/><rect x="3" y="2" width="3" height="1" fill="#f4f4f4"/><rect x="1" y="4" width="1" height="1" fill="#fff"/><rect x="3" y="4" width="3" height="1" fill="#f4f4f4"/><rect x="1" y="6" width="1" height="1" fill="#fff"/><rect x="3" y="6" width="3" height="1" fill="#f4f4f4"/><rect x="1" y="8" width="1" height="1" fill="#fff"/><rect x="3" y="8" width="3" height="1" fill="#f4f4f4"/><rect x="7" y="3" width="2" height="1" fill="#2fcf9a"/><rect x="7" y="5" width="2" height="1" fill="#2fcf9a"/><rect x="7" y="7" width="3" height="1" fill="#25b585"/><rect x="8" y="9" width="1" height="2" fill="#fdf6b8"/><rect x="10" y="9" width="1" height="2" fill="#fdf6b8"/><rect x="12" y="9" width="1" height="2" fill="#fdf6b8"/><rect x="14" y="9" width="1" height="2" fill="#fdf6b8"/></svg>
<div class="cell" style="left:750px;top:615px;width:240px;height:18px"><span class="t" style="transform:scaleX(0.9566);">Kame_MB.PcbDoc</span></div>
<div class="cb" style="top:634px"><svg width="14" height="14" viewBox="0 0 14 14"><path d="M3 6.2L6.95 8.85L11 4.1" fill="none" stroke="#f2f2f2" stroke-width="1.2"/></svg></div>
<div class="cell" style="left:128px;top:633px;width:240px;height:18px"><span class="t" style="transform:scaleX(1.1339);">Add</span></div>
<svg class="ic" style="left:373px;top:637px" width="16" height="9" viewBox="0 0 16 9"><path d="M0 2.5H3M0 6.5H3M12 4.5H16" stroke="#d2aa48" stroke-width="1" fill="none"/><path d="M3 0H10L12.4 2.6V6.4L10 9H3Z" fill="#d6ab42"/><path d="M4 1H9.5L11.4 3V6L9.5 8H4Z" fill="#f0d680"/><path d="M4 1H5.5V8H4Z" fill="#fbefc5"/></svg>
<div class="cell" style="left:393px;top:633px;width:251px;height:18px"><span class="t" style="transform:scaleX(1.0305);">Polygon Connect Style [Style - Relief Connect    Width = 10mil    Angle = 90 Angle    4 Entries]</span></div>
<div class="cell" style="left:646.5px;top:633px;width:60px;height:18px"><span class="t" style="transform:scaleX(1.1871);">To</span></div>
<svg class="ic" style="left:730px;top:636px" width="16" height="12" viewBox="0 0 16 12"><path d="M0 0H16V12H7V11H0Z" fill="#077a53"/><path d="M0.5 0.5H15.5" stroke="#2bb98a" stroke-width="1"/><path d="M7 5.5V11.5H15.5V0.5" stroke="#056a45" stroke-width="1" fill="none"/><rect x="6.5" y="1.5" width="3.5" height="7.5" fill="#04633f" opacity="0.75"/><rect x="10" y="6.2" width="5" height="2.6" fill="#04633f" opacity="0.6"/><rect x="10" y="2" width="4" height="4" fill="#e9f7ef"/><rect x="11" y="3" width="3" height="3" fill="#bfe3d0"/><rect x="1" y="2" width="1" height="1" fill="#fff"/><rect x="3" y="2" width="3" height="1" fill="#f4f4f4"/><rect x="1" y="4" width="1" height="1" fill="#fff"/><rect x="3" y="4" width="3" height="1" fill="#f4f4f4"/><rect x="1" y="6" width="1" height="1" fill="#fff"/><rect x="3" y="6" width="3" height="1" fill="#f4f4f4"/><rect x="1" y="8" width="1" height="1" fill="#fff"/><rect x="3" y="8" width="3" height="1" fill="#f4f4f4"/><rect x="7" y="3" width="2" height="1" fill="#2fcf9a"/><rect x="7" y="5" width="2" height="1" fill="#2fcf9a"/><rect x="7" y="7" width="3" height="1" fill="#25b585"/><rect x="8" y="9" width="1" height="2" fill="#fdf6b8"/><rect x="10" y="9" width="1" height="2" fill="#fdf6b8"/><rect x="12" y="9" width="1" height="2" fill="#fdf6b8"/><rect x="14" y="9" width="1" height="2" fill="#fdf6b8"/></svg>
<div class="cell" style="left:750px;top:633px;width:240px;height:18px"><span class="t" style="transform:scaleX(0.9566);">Kame_MB.PcbDoc</span></div>
<div class="cb" style="top:652px"><svg width="14" height="14" viewBox="0 0 14 14"><path d="M3 6.2L6.95 8.85L11 4.1" fill="none" stroke="#f2f2f2" stroke-width="1.2"/></svg></div>
<div class="cell" style="left:128px;top:651px;width:240px;height:18px"><span class="t" style="transform:scaleX(1.1339);">Add</span></div>
<svg class="ic" style="left:373px;top:655px" width="16" height="9" viewBox="0 0 16 9"><path d="M0 2.5H3M0 6.5H3M12 4.5H16" stroke="#d2aa48" stroke-width="1" fill="none"/><path d="M3 0H10L12.4 2.6V6.4L10 9H3Z" fill="#d6ab42"/><path d="M4 1H9.5L11.4 3V6L9.5 8H4Z" fill="#f0d680"/><path d="M4 1H5.5V8H4Z" fill="#fbefc5"/></svg>
<div class="cell" style="left:393px;top:651px;width:251px;height:18px"><span class="t" style="transform:scaleX(1.0305);">Polygon Connect Style [Style - Relief Connect    Width = 10mil    Angle = 90 Angle    4 Entries]</span></div>
<div class="cell" style="left:646.5px;top:651px;width:60px;height:18px"><span class="t" style="transform:scaleX(1.1871);">To</span></div>
<svg class="ic" style="left:730px;top:654px" width="16" height="12" viewBox="0 0 16 12"><path d="M0 0H16V12H7V11H0Z" fill="#077a53"/><path d="M0.5 0.5H15.5" stroke="#2bb98a" stroke-width="1"/><path d="M7 5.5V11.5H15.5V0.5" stroke="#056a45" stroke-width="1" fill="none"/><rect x="6.5" y="1.5" width="3.5" height="7.5" fill="#04633f" opacity="0.75"/><rect x="10" y="6.2" width="5" height="2.6" fill="#04633f" opacity="0.6"/><rect x="10" y="2" width="4" height="4" fill="#e9f7ef"/><rect x="11" y="3" width="3" height="3" fill="#bfe3d0"/><rect x="1" y="2" width="1" height="1" fill="#fff"/><rect x="3" y="2" width="3" height="1" fill="#f4f4f4"/><rect x="1" y="4" width="1" height="1" fill="#fff"/><rect x="3" y="4" width="3" height="1" fill="#f4f4f4"/><rect x="1" y="6" width="1" height="1" fill="#fff"/><rect x="3" y="6" width="3" height="1" fill="#f4f4f4"/><rect x="1" y="8" width="1" height="1" fill="#fff"/><rect x="3" y="8" width="3" height="1" fill="#f4f4f4"/><rect x="7" y="3" width="2" height="1" fill="#2fcf9a"/><rect x="7" y="5" width="2" height="1" fill="#2fcf9a"/><rect x="7" y="7" width="3" height="1" fill="#25b585"/><rect x="8" y="9" width="1" height="2" fill="#fdf6b8"/><rect x="10" y="9" width="1" height="2" fill="#fdf6b8"/><rect x="12" y="9" width="1" height="2" fill="#fdf6b8"/><rect x="14" y="9" width="1" height="2" fill="#fdf6b8"/></svg>
<div class="cell" style="left:750px;top:651px;width:240px;height:18px"><span class="t" style="transform:scaleX(0.9566);">Kame_MB.PcbDoc</span></div>
<div class="cb" style="top:670px"><svg width="14" height="14" viewBox="0 0 14 14"><path d="M3 6.2L6.95 8.85L11 4.1" fill="none" stroke="#f2f2f2" stroke-width="1.2"/></svg></div>
<div class="cell" style="left:128px;top:669px;width:240px;height:18px"><span class="t" style="transform:scaleX(1.1339);">Add</span></div>
<svg class="ic" style="left:373px;top:673px" width="16" height="9" viewBox="0 0 16 9"><path d="M0 2.5H3M0 6.5H3M12 4.5H16" stroke="#d2aa48" stroke-width="1" fill="none"/><path d="M3 0H10L12.4 2.6V6.4L10 9H3Z" fill="#d6ab42"/><path d="M4 1H9.5L11.4 3V6L9.5 8H4Z" fill="#f0d680"/><path d="M4 1H5.5V8H4Z" fill="#fbefc5"/></svg>
<div class="cell" style="left:393px;top:669px;width:251px;height:18px"><span class="t" style="transform:scaleX(1.0305);">Polygon Connect Style [Style - Relief Connect    Width = 10mil    Angle = 90 Angle    4 Entries]</span></div>
<div class="cell" style="left:646.5px;top:669px;width:60px;height:18px"><span class="t" style="transform:scaleX(1.1871);">To</span></div>
<svg class="ic" style="left:730px;top:672px" width="16" height="12" viewBox="0 0 16 12"><path d="M0 0H16V12H7V11H0Z" fill="#077a53"/><path d="M0.5 0.5H15.5" stroke="#2bb98a" stroke-width="1"/><path d="M7 5.5V11.5H15.5V0.5" stroke="#056a45" stroke-width="1" fill="none"/><rect x="6.5" y="1.5" width="3.5" height="7.5" fill="#04633f" opacity="0.75"/><rect x="10" y="6.2" width="5" height="2.6" fill="#04633f" opacity="0.6"/><rect x="10" y="2" width="4" height="4" fill="#e9f7ef"/><rect x="11" y="3" width="3" height="3" fill="#bfe3d0"/><rect x="1" y="2" width="1" height="1" fill="#fff"/><rect x="3" y="2" width="3" height="1" fill="#f4f4f4"/><rect x="1" y="4" width="1" height="1" fill="#fff"/><rect x="3" y="4" width="3" height="1" fill="#f4f4f4"/><rect x="1" y="6" width="1" height="1" fill="#fff"/><rect x="3" y="6" width="3" height="1" fill="#f4f4f4"/><rect x="1" y="8" width="1" height="1" fill="#fff"/><rect x="3" y="8" width="3" height="1" fill="#f4f4f4"/><rect x="7" y="3" width="2" height="1" fill="#2fcf9a"/><rect x="7" y="5" width="2" height="1" fill="#2fcf9a"/><rect x="7" y="7" width="3" height="1" fill="#25b585"/><rect x="8" y="9" width="1" height="2" fill="#fdf6b8"/><rect x="10" y="9" width="1" height="2" fill="#fdf6b8"/><rect x="12" y="9" width="1" height="2" fill="#fdf6b8"/><rect x="14" y="9" width="1" height="2" fill="#fdf6b8"/></svg>
<div class="cell" style="left:750px;top:669px;width:240px;height:18px"><span class="t" style="transform:scaleX(0.9566);">Kame_MB.PcbDoc</span></div>
<div class="cb" style="top:688px"><svg width="14" height="14" viewBox="0 0 14 14"><path d="M3 6.2L6.95 8.85L11 4.1" fill="none" stroke="#f2f2f2" stroke-width="1.2"/></svg></div>
<div class="cell" style="left:128px;top:687px;width:240px;height:18px"><span class="t" style="transform:scaleX(1.1339);">Add</span></div>
<svg class="ic" style="left:373px;top:691px" width="16" height="9" viewBox="0 0 16 9"><path d="M0 2.5H3M0 6.5H3M12 4.5H16" stroke="#d2aa48" stroke-width="1" fill="none"/><path d="M3 0H10L12.4 2.6V6.4L10 9H3Z" fill="#d6ab42"/><path d="M4 1H9.5L11.4 3V6L9.5 8H4Z" fill="#f0d680"/><path d="M4 1H5.5V8H4Z" fill="#fbefc5"/></svg>
<div class="cell" style="left:393px;top:687px;width:251px;height:18px"><span class="t" style="transform:scaleX(1.0305);">Polygon Connect Style [Style - Relief Connect    Width = 10mil    Angle = 90 Angle    4 Entries]</span></div>
<div class="cell" style="left:646.5px;top:687px;width:60px;height:18px"><span class="t" style="transform:scaleX(1.1871);">To</span></div>
<svg class="ic" style="left:730px;top:690px" width="16" height="12" viewBox="0 0 16 12"><path d="M0 0H16V12H7V11H0Z" fill="#077a53"/><path d="M0.5 0.5H15.5" stroke="#2bb98a" stroke-width="1"/><path d="M7 5.5V11.5H15.5V0.5" stroke="#056a45" stroke-width="1" fill="none"/><rect x="6.5" y="1.5" width="3.5" height="7.5" fill="#04633f" opacity="0.75"/><rect x="10" y="6.2" width="5" height="2.6" fill="#04633f" opacity="0.6"/><rect x="10" y="2" width="4" height="4" fill="#e9f7ef"/><rect x="11" y="3" width="3" height="3" fill="#bfe3d0"/><rect x="1" y="2" width="1" height="1" fill="#fff"/><rect x="3" y="2" width="3" height="1" fill="#f4f4f4"/><rect x="1" y="4" width="1" height="1" fill="#fff"/><rect x="3" y="4" width="3" height="1" fill="#f4f4f4"/><rect x="1" y="6" width="1" height="1" fill="#fff"/><rect x="3" y="6" width="3" height="1" fill="#f4f4f4"/><rect x="1" y="8" width="1" height="1" fill="#fff"/><rect x="3" y="8" width="3" height="1" fill="#f4f4f4"/><rect x="7" y="3" width="2" height="1" fill="#2fcf9a"/><rect x="7" y="5" width="2" height="1" fill="#2fcf9a"/><rect x="7" y="7" width="3" height="1" fill="#25b585"/><rect x="8" y="9" width="1" height="2" fill="#fdf6b8"/><rect x="10" y="9" width="1" height="2" fill="#fdf6b8"/><rect x="12" y="9" width="1" height="2" fill="#fdf6b8"/><rect x="14" y="9" width="1" height="2" fill="#fdf6b8"/></svg>
<div class="cell" style="left:750px;top:687px;width:240px;height:18px"><span class="t" style="transform:scaleX(0.9566);">Kame_MB.PcbDoc</span></div>
<div class="cb" style="top:706px"><svg width="14" height="14" viewBox="0 0 14 14"><path d="M3 6.2L6.95 8.85L11 4.1" fill="none" stroke="#f2f2f2" stroke-width="1.2"/></svg></div>
<div class="cell" style="left:128px;top:705px;width:240px;height:18px"><span class="t" style="transform:scaleX(1.1339);">Add</span></div>
<svg class="ic" style="left:373px;top:709px" width="16" height="9" viewBox="0 0 16 9"><path d="M0 2.5H3M0 6.5H3M12 4.5H16" stroke="#d2aa48" stroke-width="1" fill="none"/><path d="M3 0H10L12.4 2.6V6.4L10 9H3Z" fill="#d6ab42"/><path d="M4 1H9.5L11.4 3V6L9.5 8H4Z" fill="#f0d680"/><path d="M4 1H5.5V8H4Z" fill="#fbefc5"/></svg>
<div class="cell" style="left:393px;top:705px;width:251px;height:18px"><span class="t" style="transform:scaleX(1.0305);">Polygon Connect Style [Style - Relief Connect    Width = 10mil    Angle = 90 Angle    4 Entries]</span></div>
<div class="cell" style="left:646.5px;top:705px;width:60px;height:18px"><span class="t" style="transform:scaleX(1.1871);">To</span></div>
<svg class="ic" style="left:730px;top:708px" width="16" height="12" viewBox="0 0 16 12"><path d="M0 0H16V12H7V11H0Z" fill="#077a53"/><path d="M0.5 0.5H15.5" stroke="#2bb98a" stroke-width="1"/><path d="M7 5.5V11.5H15.5V0.5" stroke="#056a45" stroke-width="1" fill="none"/><rect x="6.5" y="1.5" width="3.5" height="7.5" fill="#04633f" opacity="0.75"/><rect x="10" y="6.2" width="5" height="2.6" fill="#04633f" opacity="0.6"/><rect x="10" y="2" width="4" height="4" fill="#e9f7ef"/><rect x="11" y="3" width="3" height="3" fill="#bfe3d0"/><rect x="1" y="2" width="1" height="1" fill="#fff"/><rect x="3" y="2" width="3" height="1" fill="#f4f4f4"/><rect x="1" y="4" width="1" height="1" fill="#fff"/><rect x="3" y="4" width="3" height="1" fill="#f4f4f4"/><rect x="1" y="6" width="1" height="1" fill="#fff"/><rect x="3" y="6" width="3" height="1" fill="#f4f4f4"/><rect x="1" y="8" width="1" height="1" fill="#fff"/><rect x="3" y="8" width="3" height="1" fill="#f4f4f4"/><rect x="7" y="3" width="2" height="1" fill="#2fcf9a"/><rect x="7" y="5" width="2" height="1" fill="#2fcf9a"/><rect x="7" y="7" width="3" height="1" fill="#25b585"/><rect x="8" y="9" width="1" height="2" fill="#fdf6b8"/><rect x="10" y="9" width="1" height="2" fill="#fdf6b8"/><rect x="12" y="9" width="1" height="2" fill="#fdf6b8"/><rect x="14" y="9" width="1" height="2" fill="#fdf6b8"/></svg>
<div class="cell" style="left:750px;top:705px;width:240px;height:18px"><span class="t" style="transform:scaleX(0.9566);">Kame_MB.PcbDoc</span></div>
<div class="cb" style="top:724px"><svg width="14" height="14" viewBox="0 0 14 14"><path d="M3 6.2L6.95 8.85L11 4.1" fill="none" stroke="#f2f2f2" stroke-width="1.2"/></svg></div>
<div class="cell" style="left:128px;top:723px;width:240px;height:18px"><span class="t" style="transform:scaleX(1.1339);">Add</span></div>
<svg class="ic" style="left:373px;top:727px" width="16" height="9" viewBox="0 0 16 9"><path d="M0 2.5H3M0 6.5H3M12 4.5H16" stroke="#d2aa48" stroke-width="1" fill="none"/><path d="M3 0H10L12.4 2.6V6.4L10 9H3Z" fill="#d6ab42"/><path d="M4 1H9.5L11.4 3V6L9.5 8H4Z" fill="#f0d680"/><path d="M4 1H5.5V8H4Z" fill="#fbefc5"/></svg>
<div class="cell" style="left:393px;top:723px;width:251px;height:18px"><span class="t" style="transform:scaleX(1.0305);">Polygon Connect Style [Style - Relief Connect    Width = 10mil    Angle = 90 Angle    4 Entries]</span></div>
<div class="cell" style="left:646.5px;top:723px;width:60px;height:18px"><span class="t" style="transform:scaleX(1.1871);">To</span></div>
<svg class="ic" style="left:730px;top:726px" width="16" height="12" viewBox="0 0 16 12"><path d="M0 0H16V12H7V11H0Z" fill="#077a53"/><path d="M0.5 0.5H15.5" stroke="#2bb98a" stroke-width="1"/><path d="M7 5.5V11.5H15.5V0.5" stroke="#056a45" stroke-width="1" fill="none"/><rect x="6.5" y="1.5" width="3.5" height="7.5" fill="#04633f" opacity="0.75"/><rect x="10" y="6.2" width="5" height="2.6" fill="#04633f" opacity="0.6"/><rect x="10" y="2" width="4" height="4" fill="#e9f7ef"/><rect x="11" y="3" width="3" height="3" fill="#bfe3d0"/><rect x="1" y="2" width="1" height="1" fill="#fff"/><rect x="3" y="2" width="3" height="1" fill="#f4f4f4"/><rect x="1" y="4" width="1" height="1" fill="#fff"/><rect x="3" y="4" width="3" height="1" fill="#f4f4f4"/><rect x="1" y="6" width="1" height="1" fill="#fff"/><rect x="3" y="6" width="3" height="1" fill="#f4f4f4"/><rect x="1" y="8" width="1" height="1" fill="#fff"/><rect x="3" y="8" width="3" height="1" fill="#f4f4f4"/><rect x="7" y="3" width="2" height="1" fill="#2fcf9a"/><rect x="7" y="5" width="2" height="1" fill="#2fcf9a"/><rect x="7" y="7" width="3" height="1" fill="#25b585"/><rect x="8" y="9" width="1" height="2" fill="#fdf6b8"/><rect x="10" y="9" width="1" height="2" fill="#fdf6b8"/><rect x="12" y="9" width="1" height="2" fill="#fdf6b8"/><rect x="14" y="9" width="1" height="2" fill="#fdf6b8"/></svg>
<div class="cell" style="left:750px;top:723px;width:240px;height:18px"><span class="t" style="transform:scaleX(0.9566);">Kame_MB.PcbDoc</span></div>
<div class="cb" style="top:741px"><svg width="14" height="14" viewBox="0 0 14 14"><path d="M3 6.2L6.95 8.85L11 4.1" fill="none" stroke="#f2f2f2" stroke-width="1.2"/></svg></div>
<div class="cell" style="left:128px;top:740px;width:240px;height:18px"><span class="t" style="transform:scaleX(1.1339);">Add</span></div>
<svg class="ic" style="left:373px;top:744px" width="16" height="9" viewBox="0 0 16 9"><path d="M0 2.5H3M0 6.5H3M12 4.5H16" stroke="#d2aa48" stroke-width="1" fill="none"/><path d="M3 0H10L12.4 2.6V6.4L10 9H3Z" fill="#d6ab42"/><path d="M4 1H9.5L11.4 3V6L9.5 8H4Z" fill="#f0d680"/><path d="M4 1H5.5V8H4Z" fill="#fbefc5"/></svg>
<div class="cell" style="left:393px;top:740px;width:251px;height:18px"><span class="t" style="transform:scaleX(1.0245);">Routing Via Style [Pref Size = 50mil    Pref Hole Size = 28mil    Min Size = 50mil]</span></div>
<div class="cell" style="left:646.5px;top:740px;width:60px;height:18px"><span class="t" style="transform:scaleX(1.1871);">To</span></div>
<svg class="ic" style="left:730px;top:743px" width="16" height="12" viewBox="0 0 16 12"><path d="M0 0H16V12H7V11H0Z" fill="#077a53"/><path d="M0.5 0.5H15.5" stroke="#2bb98a" stroke-width="1"/><path d="M7 5.5V11.5H15.5V0.5" stroke="#056a45" stroke-width="1" fill="none"/><rect x="6.5" y="1.5" width="3.5" height="7.5" fill="#04633f" opacity="0.75"/><rect x="10" y="6.2" width="5" height="2.6" fill="#04633f" opacity="0.6"/><rect x="10" y="2" width="4" height="4" fill="#e9f7ef"/><rect x="11" y="3" width="3" height="3" fill="#bfe3d0"/><rect x="1" y="2" width="1" height="1" fill="#fff"/><rect x="3" y="2" width="3" height="1" fill="#f4f4f4"/><rect x="1" y="4" width="1" height="1" fill="#fff"/><rect x="3" y="4" width="3" height="1" fill="#f4f4f4"/><rect x="1" y="6" width="1" height="1" fill="#fff"/><rect x="3" y="6" width="3" height="1" fill="#f4f4f4"/><rect x="1" y="8" width="1" height="1" fill="#fff"/><rect x="3" y="8" width="3" height="1" fill="#f4f4f4"/><rect x="7" y="3" width="2" height="1" fill="#2fcf9a"/><rect x="7" y="5" width="2" height="1" fill="#2fcf9a"/><rect x="7" y="7" width="3" height="1" fill="#25b585"/><rect x="8" y="9" width="1" height="2" fill="#fdf6b8"/><rect x="10" y="9" width="1" height="2" fill="#fdf6b8"/><rect x="12" y="9" width="1" height="2" fill="#fdf6b8"/><rect x="14" y="9" width="1" height="2" fill="#fdf6b8"/></svg>
<div class="cell" style="left:750px;top:740px;width:240px;height:18px"><span class="t" style="transform:scaleX(0.9566);">Kame_MB.PcbDoc</span></div>
<div class="cb" style="top:759px"><svg width="14" height="14" viewBox="0 0 14 14"><path d="M3 6.2L6.95 8.85L11 4.1" fill="none" stroke="#f2f2f2" stroke-width="1.2"/></svg></div>
<div class="cell" style="left:128px;top:758px;width:240px;height:18px"><span class="t" style="transform:scaleX(1.1339);">Add</span></div>
<svg class="ic" style="left:373px;top:762px" width="16" height="9" viewBox="0 0 16 9"><path d="M0 2.5H3M0 6.5H3M12 4.5H16" stroke="#d2aa48" stroke-width="1" fill="none"/><path d="M3 0H10L12.4 2.6V6.4L10 9H3Z" fill="#d6ab42"/><path d="M4 1H9.5L11.4 3V6L9.5 8H4Z" fill="#f0d680"/><path d="M4 1H5.5V8H4Z" fill="#fbefc5"/></svg>
<div class="cell" style="left:393px;top:758px;width:251px;height:18px"><span class="t" style="transform:scaleX(1.0695);">Width Constraint [Pref Width = 4.921mil    Min Width = 4.921mil    Max Width = 4.921mil]</span></div>
<div class="cell" style="left:646.5px;top:758px;width:60px;height:18px"><span class="t" style="transform:scaleX(1.1871);">To</span></div>
<svg class="ic" style="left:730px;top:761px" width="16" height="12" viewBox="0 0 16 12"><path d="M0 0H16V12H7V11H0Z" fill="#077a53"/><path d="M0.5 0.5H15.5" stroke="#2bb98a" stroke-width="1"/><path d="M7 5.5V11.5H15.5V0.5" stroke="#056a45" stroke-width="1" fill="none"/><rect x="6.5" y="1.5" width="3.5" height="7.5" fill="#04633f" opacity="0.75"/><rect x="10" y="6.2" width="5" height="2.6" fill="#04633f" opacity="0.6"/><rect x="10" y="2" width="4" height="4" fill="#e9f7ef"/><rect x="11" y="3" width="3" height="3" fill="#bfe3d0"/><rect x="1" y="2" width="1" height="1" fill="#fff"/><rect x="3" y="2" width="3" height="1" fill="#f4f4f4"/><rect x="1" y="4" width="1" height="1" fill="#fff"/><rect x="3" y="4" width="3" height="1" fill="#f4f4f4"/><rect x="1" y="6" width="1" height="1" fill="#fff"/><rect x="3" y="6" width="3" height="1" fill="#f4f4f4"/><rect x="1" y="8" width="1" height="1" fill="#fff"/><rect x="3" y="8" width="3" height="1" fill="#f4f4f4"/><rect x="7" y="3" width="2" height="1" fill="#2fcf9a"/><rect x="7" y="5" width="2" height="1" fill="#2fcf9a"/><rect x="7" y="7" width="3" height="1" fill="#25b585"/><rect x="8" y="9" width="1" height="2" fill="#fdf6b8"/><rect x="10" y="9" width="1" height="2" fill="#fdf6b8"/><rect x="12" y="9" width="1" height="2" fill="#fdf6b8"/><rect x="14" y="9" width="1" height="2" fill="#fdf6b8"/></svg>
<div class="cell" style="left:750px;top:758px;width:240px;height:18px"><span class="t" style="transform:scaleX(0.9566);">Kame_MB.PcbDoc</span></div>
<div class="g" style="top:776px"></div>
<svg class="ic" style="left:21px;top:782px" width="6" height="6" viewBox="0 0 6 6"><path d="M6 0.3V6H0.3Z" fill="#fafafa"/></svg>
<svg class="ic" style="left:34px;top:779px" width="14" height="12" viewBox="0 0 14 12"><path d="M0 2.4Q0.3 1.2 1.6 0.9L2.2 0.1H5.9Q7 0.9 7.7 2H14V12H0Z" fill="#cf4719"/><path d="M1 2.2L2.2 1H5.7L7.1 3H13V11H1Z" fill="url(#fg)"/><path d="M2.2 1.5H5.5M7.4 3.5H13" stroke="#f6c9ad" stroke-width="1" fill="none"/><path d="M1.5 2.5V10.8" stroke="#f3b296" stroke-width="1"/></svg>
<div class="cell" style="left:128px;top:776px;width:500px;height:18px"><span class="t" style="transform:scaleX(1.0077);">Change Clearances Matrixes(2)</span></div>
<div class="cb" style="top:795px"><svg width="14" height="14" viewBox="0 0 14 14"><path d="M3 6.2L6.95 8.85L11 4.1" fill="none" stroke="#f2f2f2" stroke-width="1.2"/></svg></div>
<div class="cell" style="left:128px;top:794px;width:240px;height:18px"><span class="t" style="transform:scaleX(1.1479);">Modify</span></div>
<svg class="ic" style="left:374px;top:796px" width="14" height="14" viewBox="0 0 14 14"><path d="M2 0.5H0.5V13.5H2M12 0.5H13.5V13.5H12" fill="none" stroke="#4a80e8" stroke-width="1"/><rect x="3" y="3" width="2" height="2" fill="#fff"/><rect x="3" y="6" width="2" height="2" fill="#fff"/><rect x="3" y="9" width="2" height="2" fill="#fff"/><rect x="6" y="3" width="2" height="2" fill="#fff"/><rect x="6" y="6" width="2" height="2" fill="#fff"/><rect x="6" y="9" width="2" height="2" fill="#fff"/><rect x="9" y="3" width="2" height="2" fill="#fff"/><rect x="9" y="6" width="2" height="2" fill="#fff"/><rect x="9" y="9" width="2" height="2" fill="#fff"/></svg>
<div class="cell" style="left:393px;top:794px;width:251px;height:18px"><span class="t" style="transform:scaleX(1.0026);">Clearances Matrix (scopes: 70) -&gt; Clearances Matrix (scopes: 70)</span></div>
<div class="cell" style="left:646.5px;top:794px;width:60px;height:18px"><span class="t" style="transform:scaleX(1.1211);">In</span></div>
<svg class="ic" style="left:730px;top:797px" width="16" height="12" viewBox="0 0 16 12"><path d="M0 0H16V12H7V11H0Z" fill="#077a53"/><path d="M0.5 0.5H15.5" stroke="#2bb98a" stroke-width="1"/><path d="M7 5.5V11.5H15.5V0.5" stroke="#056a45" stroke-width="1" fill="none"/><rect x="6.5" y="1.5" width="3.5" height="7.5" fill="#04633f" opacity="0.75"/><rect x="10" y="6.2" width="5" height="2.6" fill="#04633f" opacity="0.6"/><rect x="10" y="2" width="4" height="4" fill="#e9f7ef"/><rect x="11" y="3" width="3" height="3" fill="#bfe3d0"/><rect x="1" y="2" width="1" height="1" fill="#fff"/><rect x="3" y="2" width="3" height="1" fill="#f4f4f4"/><rect x="1" y="4" width="1" height="1" fill="#fff"/><rect x="3" y="4" width="3" height="1" fill="#f4f4f4"/><rect x="1" y="6" width="1" height="1" fill="#fff"/><rect x="3" y="6" width="3" height="1" fill="#f4f4f4"/><rect x="1" y="8" width="1" height="1" fill="#fff"/><rect x="3" y="8" width="3" height="1" fill="#f4f4f4"/><rect x="7" y="3" width="2" height="1" fill="#2fcf9a"/><rect x="7" y="5" width="2" height="1" fill="#2fcf9a"/><rect x="7" y="7" width="3" height="1" fill="#25b585"/><rect x="8" y="9" width="1" height="2" fill="#fdf6b8"/><rect x="10" y="9" width="1" height="2" fill="#fdf6b8"/><rect x="12" y="9" width="1" height="2" fill="#fdf6b8"/><rect x="14" y="9" width="1" height="2" fill="#fdf6b8"/></svg>
<div class="cell" style="left:750px;top:794px;width:240px;height:18px"><span class="t" style="transform:scaleX(0.9566);">Kame_MB.PcbDoc</span></div>
<div class="cb" style="top:813px"><svg width="14" height="14" viewBox="0 0 14 14"><path d="M3 6.2L6.95 8.85L11 4.1" fill="none" stroke="#f2f2f2" stroke-width="1.2"/></svg></div>
<div class="cell" style="left:128px;top:812px;width:240px;height:18px"><span class="t" style="transform:scaleX(1.1479);">Modify</span></div>
<svg class="ic" style="left:374px;top:814px" width="14" height="14" viewBox="0 0 14 14"><path d="M2 0.5H0.5V13.5H2M12 0.5H13.5V13.5H12" fill="none" stroke="#4a80e8" stroke-width="1"/><rect x="3" y="3" width="2" height="2" fill="#fff"/><rect x="3" y="6" width="2" height="2" fill="#fff"/><rect x="3" y="9" width="2" height="2" fill="#fff"/><rect x="6" y="3" width="2" height="2" fill="#fff"/><rect x="6" y="6" width="2" height="2" fill="#fff"/><rect x="6" y="9" width="2" height="2" fill="#fff"/><rect x="9" y="3" width="2" height="2" fill="#fff"/><rect x="9" y="6" width="2" height="2" fill="#fff"/><rect x="9" y="9" width="2" height="2" fill="#fff"/></svg>
<div class="cell" style="left:393px;top:812px;width:251px;height:18px"><span class="t" style="transform:scaleX(0.994);">Same Clearances Matrix (scopes: 0) -&gt; Same Clearances Matrix (scopes: 0)</span></div>
<div class="cell" style="left:646.5px;top:812px;width:60px;height:18px"><span class="t" style="transform:scaleX(1.1211);">In</span></div>
<svg class="ic" style="left:730px;top:815px" width="16" height="12" viewBox="0 0 16 12"><path d="M0 0H16V12H7V11H0Z" fill="#077a53"/><path d="M0.5 0.5H15.5" stroke="#2bb98a" stroke-width="1"/><path d="M7 5.5V11.5H15.5V0.5" stroke="#056a45" stroke-width="1" fill="none"/><rect x="6.5" y="1.5" width="3.5" height="7.5" fill="#04633f" opacity="0.75"/><rect x="10" y="6.2" width="5" height="2.6" fill="#04633f" opacity="0.6"/><rect x="10" y="2" width="4" height="4" fill="#e9f7ef"/><rect x="11" y="3" width="3" height="3" fill="#bfe3d0"/><rect x="1" y="2" width="1" height="1" fill="#fff"/><rect x="3" y="2" width="3" height="1" fill="#f4f4f4"/><rect x="1" y="4" width="1" height="1" fill="#fff"/><rect x="3" y="4" width="3" height="1" fill="#f4f4f4"/><rect x="1" y="6" width="1" height="1" fill="#fff"/><rect x="3" y="6" width="3" height="1" fill="#f4f4f4"/><rect x="1" y="8" width="1" height="1" fill="#fff"/><rect x="3" y="8" width="3" height="1" fill="#f4f4f4"/><rect x="7" y="3" width="2" height="1" fill="#2fcf9a"/><rect x="7" y="5" width="2" height="1" fill="#2fcf9a"/><rect x="7" y="7" width="3" height="1" fill="#25b585"/><rect x="8" y="9" width="1" height="2" fill="#fdf6b8"/><rect x="10" y="9" width="1" height="2" fill="#fdf6b8"/><rect x="12" y="9" width="1" height="2" fill="#fdf6b8"/><rect x="14" y="9" width="1" height="2" fill="#fdf6b8"/></svg>
<div class="cell" style="left:750px;top:812px;width:240px;height:18px"><span class="t" style="transform:scaleX(0.9566);">Kame_MB.PcbDoc</span></div>
<div class="ln" style="left:1002px;top:76px;width:1px;height:767px;background:#333"></div>
<div class="abs" style="left:49px;top:76px;width:1336px;height:1px;background:repeating-linear-gradient(90deg,#d2d2d2 0,#d2d2d2 1px,transparent 1px,transparent 2px)"></div>
<div class="abs" style="left:50px;top:93px;width:1335px;height:1px;background:repeating-linear-gradient(90deg,#d2d2d2 0,#d2d2d2 1px,transparent 1px,transparent 2px)"></div>
<div class="abs" style="left:49px;top:76px;width:1px;height:18px;background:repeating-linear-gradient(180deg,#d2d2d2 0,#d2d2d2 1px,transparent 1px,transparent 2px)"></div>
<div class="abs" style="left:1384px;top:77px;width:1px;height:17px;background:repeating-linear-gradient(180deg,#d2d2d2 0,#d2d2d2 1px,transparent 1px,transparent 2px)"></div>
<svg class="ic" style="left:1388px;top:45px" width="8" height="4" viewBox="0 0 8 4"><path d="M4 0L7.6 4H0.4Z" fill="#8a8a8a"/></svg>
<div class="thumb" style="top:54px;height:28px"></div>
<div class="thumb" style="top:801px;height:28px"></div>
<svg class="ic" style="left:1388px;top:834px" width="8" height="4" viewBox="0 0 8 4"><path d="M0 0H8L4 4Z" fill="#7c7c7c"/></svg>
<div class="btn" style="left:8px;width:102px"></div>
<div class="cell" style="left:15px;top:863px;width:110px;height:18px"><span class="t" style="transform:scaleX(1.0403);">Validate Changes</span></div>
<div class="btn" style="left:120px;width:102px"></div>
<div class="cell" style="left:128px;top:863px;width:110px;height:18px"><span class="t" style="transform:scaleX(1.0041);">Execute Changes</span></div>
<div class="btn" style="left:232px;width:102px"></div>
<div class="cell" style="left:238px;top:863px;width:110px"><span class="t" style="transform:scaleX(1.0372)"><u>R</u>eport Changes...</span></div>
<div class="abs" style="left:344px;top:863px;width:14px;height:14px;border:1px solid #252525;border-radius:3.5px;background:#555"></div>
<div class="cell" style="left:363px;top:863px;width:120px;height:18px"><span class="t" style="transform:scaleX(1.0371);">Only Show Errors</span></div>
<div class="btn" style="left:1333px;width:73px;border-color:#a6d0fa"></div>
<div class="cell" style="left:1356px;top:863px;width:50px;height:18px"><span class="t" style="transform:scaleX(1.0169);">Close</span></div>
</body></html>
